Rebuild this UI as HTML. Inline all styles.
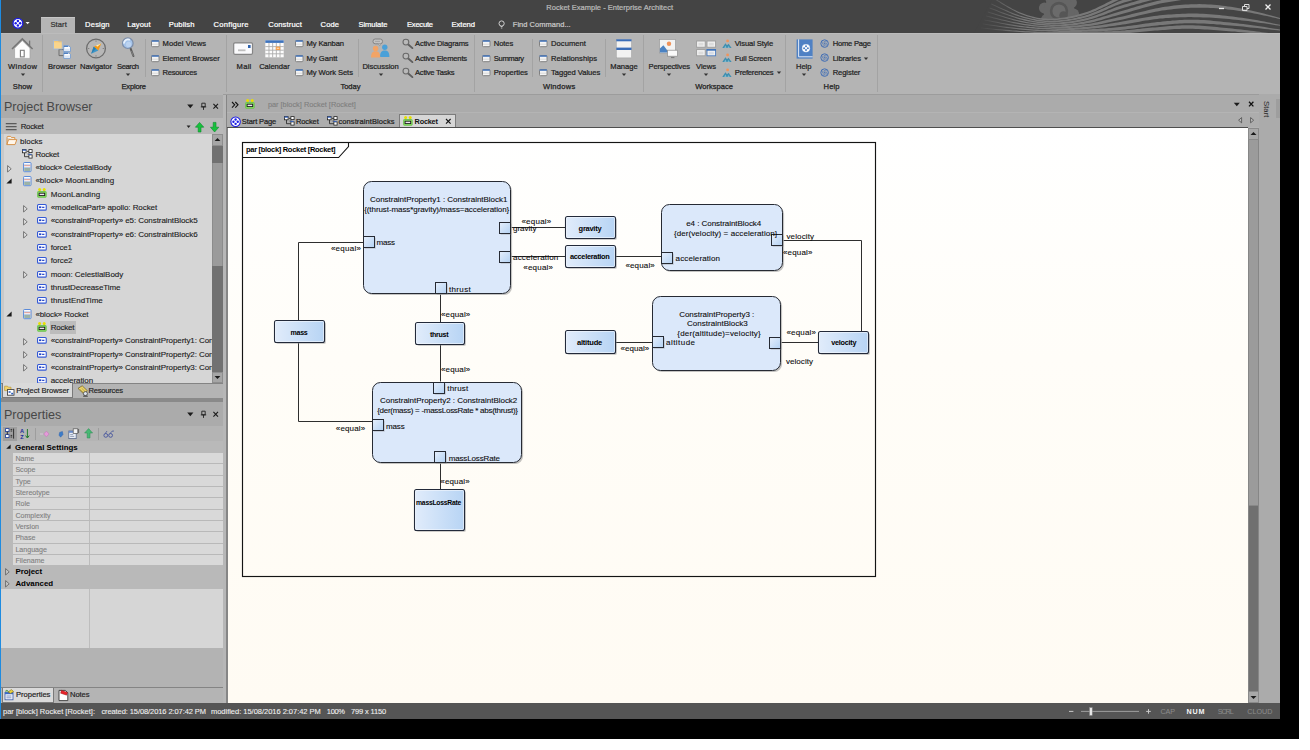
<!DOCTYPE html>
<html><head><meta charset="utf-8"><title>Rocket Example - Enterprise Architect</title><style>
html,body{margin:0;padding:0;background:#fff;}
body{width:1310px;height:750px;overflow:hidden;position:relative;font-family:"Liberation Sans",sans-serif;}
.r{position:absolute;display:block;}
svg.r{overflow:visible;}
.t{position:absolute;white-space:nowrap;font-family:"Liberation Sans",sans-serif;-webkit-text-stroke:0.22px;}
#app{position:absolute;left:0;top:0;width:1280px;height:719px;overflow:hidden;background:#b4b4b4;}
</style></head><body>
<div class="r" style="left:0px;top:0px;width:1299px;height:739px;background:#000;"></div>
<div id="app">
<div class="r" style="left:0px;top:0px;width:1280px;height:33px;background:#444444;"></div>
<svg class="r" style="left:970px;top:0px;overflow:hidden;" width="310" height="33" viewBox="0 0 310 33"><defs><linearGradient id="sf" gradientUnits="userSpaceOnUse" x1="8" x2="52" y1="0" y2="0"><stop offset="0" stop-color="#787878" stop-opacity="0"/><stop offset="1" stop-color="#787878" stop-opacity="1"/></linearGradient></defs><g transform="translate(89,11)" opacity="0.9"><circle cx="14.7" cy="3.0" r="5.4" fill="#6a6a6a"/><circle cx="8.3" cy="12.5" r="5.4" fill="#6a6a6a"/><circle cx="-3.0" cy="14.7" r="5.4" fill="#6a6a6a"/><circle cx="-12.5" cy="8.3" r="5.4" fill="#6a6a6a"/><circle cx="-14.7" cy="-3.0" r="5.4" fill="#6a6a6a"/><circle cx="-8.3" cy="-12.5" r="5.4" fill="#6a6a6a"/><circle cx="3.0" cy="-14.7" r="5.4" fill="#6a6a6a"/><circle cx="12.5" cy="-8.3" r="5.4" fill="#6a6a6a"/><circle r="15.5" fill="#6a6a6a"/><circle r="9.2" fill="#585858"/><circle r="6.6" fill="#707070"/><circle cx="4.5" cy="4.5" r="4.2" fill="#585858"/></g><polygon points="23.0,-2.0 24.2,-1.3 25.6,-0.5 27.2,0.5 29.1,1.6 31.1,2.9 33.2,4.1 35.5,5.5 37.8,6.8 40.2,8.2 42.5,9.5 44.9,10.7 47.2,11.8 49.4,12.8 51.5,13.7 53.5,14.4 55.5,15.1 57.5,15.8 59.5,16.4 61.4,17.0 63.4,17.5 65.3,17.9 67.3,18.3 69.3,18.7 71.4,19.0 73.5,19.2 75.6,19.4 77.8,19.5 80.0,19.5 82.3,19.5 84.7,19.4 87.1,19.2 89.5,19.0 92.0,18.7 94.5,18.3 97.1,17.9 99.7,17.5 102.2,17.0 104.8,16.4 107.4,15.8 109.9,15.1 112.5,14.4 115.0,13.7 117.5,12.9 120.2,11.9 122.9,10.8 125.6,9.6 128.3,8.4 131.0,7.1 133.8,5.8 136.4,4.5 139.0,3.2 141.5,2.0 143.8,0.8 146.0,-0.2 148.1,-1.2 150.0,-2.0 151.7,-2.7 153.3,-3.3 154.8,-3.9 156.2,-4.4 157.4,-4.8 158.6,-5.2 159.7,-5.5 160.7,-5.8 161.6,-6.0 162.4,-6.2 163.1,-6.5 163.8,-6.6 164.4,-6.8 165.0,-7.0 400,-10 400,40 0,40" fill="#444"/><polygon points="23.0,-2.5 24.2,-1.8 25.6,-1.0 27.2,0.0 29.1,1.1 31.1,2.3 33.2,3.6 35.5,5.0 37.8,6.3 40.2,7.6 42.5,8.9 44.9,10.1 47.2,11.2 49.4,12.2 51.5,13.1 53.5,13.8 55.5,14.5 57.5,15.2 59.5,15.8 61.4,16.3 63.4,16.8 65.3,17.3 67.3,17.7 69.3,18.0 71.4,18.3 73.5,18.5 75.6,18.6 77.8,18.7 80.0,18.8 82.3,18.7 84.7,18.6 87.1,18.4 89.5,18.1 92.0,17.8 94.5,17.4 97.1,17.0 99.7,16.5 102.2,16.0 104.8,15.4 107.4,14.8 109.9,14.1 112.5,13.3 115.0,12.6 117.5,11.7 120.2,10.7 122.9,9.6 125.6,8.4 128.3,7.1 131.0,5.8 133.8,4.5 136.4,3.1 139.0,1.8 141.5,0.6 143.8,-0.6 146.0,-1.7 148.1,-2.7 150.0,-3.5 151.7,-4.2 153.3,-4.8 154.8,-5.4 156.2,-5.9 157.4,-6.3 158.6,-6.7 159.7,-7.0 160.7,-7.3 161.6,-7.6 162.4,-7.8 163.1,-8.0 163.8,-8.2 164.4,-8.4 165.0,-8.6 165.0,-5.4 164.4,-5.3 163.8,-5.1 163.1,-4.9 162.4,-4.7 161.6,-4.5 160.7,-4.2 159.7,-3.9 158.6,-3.6 157.4,-3.3 156.2,-2.8 154.8,-2.4 153.3,-1.8 151.7,-1.2 150.0,-0.5 148.1,0.3 146.0,1.2 143.8,2.3 141.5,3.4 139.0,4.6 136.4,5.9 133.8,7.1 131.0,8.4 128.3,9.6 125.6,10.9 122.9,12.0 120.2,13.1 117.5,14.0 115.0,14.8 112.5,15.5 109.9,16.2 107.4,16.8 104.8,17.4 102.2,18.0 99.7,18.4 97.1,18.9 94.5,19.2 92.0,19.6 89.5,19.8 87.1,20.0 84.7,20.2 82.3,20.2 80.0,20.2 77.8,20.2 75.6,20.1 73.5,19.9 71.4,19.7 69.3,19.4 67.3,19.0 65.3,18.6 63.4,18.2 61.4,17.6 59.5,17.1 57.5,16.4 55.5,15.8 53.5,15.1 51.5,14.3 49.4,13.4 47.2,12.4 44.9,11.3 42.5,10.0 40.2,8.7 37.8,7.4 35.5,6.0 33.2,4.7 31.1,3.4 29.1,2.1 27.2,1.0 25.6,-0.0 24.2,-0.9 23.0,-1.5" fill="url(#sf)"/><polygon points="21.3,3.5 22.5,4.1 24.0,4.7 25.8,5.6 27.8,6.5 29.9,7.4 32.2,8.5 34.6,9.5 37.1,10.6 39.6,11.7 42.1,12.7 44.6,13.7 47.0,14.6 49.4,15.4 51.6,16.1 53.8,16.7 56.0,17.3 58.1,17.8 60.2,18.3 62.3,18.7 64.5,19.1 66.6,19.5 68.7,19.8 70.9,20.1 73.1,20.3 75.3,20.5 77.5,20.6 79.7,20.7 82.0,20.7 84.3,20.6 86.7,20.5 89.0,20.3 91.4,20.1 93.9,19.8 96.3,19.5 98.8,19.1 101.2,18.7 103.7,18.2 106.2,17.7 108.6,17.1 111.1,16.5 113.6,15.9 116.0,15.2 118.5,14.4 121.0,13.5 123.5,12.6 126.1,11.5 128.6,10.5 131.2,9.3 133.8,8.2 136.3,7.0 138.7,5.9 141.2,4.8 143.5,3.7 145.8,2.7 147.9,1.8 150.0,1.0 152.0,0.3 154.0,-0.4 155.9,-1.0 157.8,-1.6 159.6,-2.2 161.4,-2.7 163.1,-3.2 164.7,-3.6 166.3,-4.0 167.7,-4.4 169.0,-4.7 170.1,-5.1 171.1,-5.3 172.0,-5.6 172.0,-2.4 171.1,-2.2 170.1,-1.9 169.0,-1.6 167.7,-1.3 166.3,-0.9 164.7,-0.5 163.1,-0.1 161.4,0.4 159.6,0.9 157.8,1.4 155.9,2.0 154.0,2.6 152.0,3.3 150.0,4.0 147.9,4.8 145.8,5.6 143.5,6.6 141.2,7.6 138.7,8.6 136.3,9.7 133.8,10.8 131.2,11.9 128.6,13.0 126.1,14.0 123.5,15.0 121.0,15.9 118.5,16.7 116.0,17.5 113.6,18.1 111.1,18.7 108.6,19.2 106.2,19.7 103.7,20.2 101.2,20.6 98.8,21.0 96.3,21.3 93.9,21.6 91.4,21.8 89.0,22.0 86.7,22.1 84.3,22.2 82.0,22.2 79.7,22.2 77.5,22.1 75.3,21.9 73.1,21.8 70.9,21.5 68.7,21.2 66.6,20.9 64.5,20.5 62.3,20.1 60.2,19.6 58.1,19.1 56.0,18.5 53.8,17.9 51.6,17.3 49.4,16.6 47.0,15.8 44.6,14.9 42.1,13.9 39.6,12.8 37.1,11.7 34.6,10.6 32.2,9.5 29.9,8.4 27.8,7.4 25.8,6.5 24.0,5.7 22.5,5.0 21.3,4.5" fill="url(#sf)"/><polygon points="19.6,7.6 20.9,8.0 22.5,8.6 24.4,9.3 26.5,10.1 28.7,11.0 31.1,11.9 33.7,12.8 36.3,13.8 39.0,14.7 41.7,15.6 44.3,16.5 46.9,17.3 49.4,18.0 51.8,18.6 54.1,19.1 56.4,19.6 58.7,20.1 61.0,20.5 63.3,20.9 65.6,21.2 67.8,21.6 70.1,21.8 72.4,22.1 74.7,22.3 77.0,22.4 79.4,22.5 81.7,22.6 84.0,22.6 86.3,22.5 88.7,22.4 91.0,22.3 93.4,22.1 95.7,21.8 98.1,21.6 100.5,21.2 102.8,20.9 105.2,20.5 107.5,20.0 109.9,19.6 112.3,19.1 114.6,18.5 117.0,17.9 119.4,17.3 121.7,16.6 124.1,15.8 126.5,15.0 128.9,14.1 131.3,13.2 133.7,12.2 136.1,11.3 138.4,10.3 140.8,9.4 143.1,8.5 145.4,7.6 147.7,6.8 150.0,6.0 152.3,5.3 154.5,4.6 156.8,3.9 159.1,3.2 161.4,2.5 163.7,1.9 165.9,1.2 168.1,0.6 170.3,0.0 172.4,-0.6 174.4,-1.1 176.4,-1.6 178.2,-2.1 180.0,-2.6 181.7,-3.1 183.4,-3.5 185.0,-3.9 186.5,-4.2 188.1,-4.6 189.5,-4.9 190.9,-5.2 192.2,-5.5 193.4,-5.7 194.5,-5.9 195.5,-6.2 196.5,-6.4 197.3,-6.5 198.0,-6.7 198.0,-3.3 197.3,-3.2 196.5,-3.0 195.5,-2.8 194.5,-2.6 193.4,-2.4 192.2,-2.1 190.9,-1.9 189.5,-1.6 188.1,-1.3 186.5,-1.0 185.0,-0.6 183.4,-0.2 181.7,0.2 180.0,0.6 178.2,1.1 176.4,1.6 174.4,2.1 172.4,2.6 170.3,3.2 168.1,3.7 165.9,4.3 163.7,5.0 161.4,5.6 159.1,6.3 156.8,6.9 154.5,7.6 152.3,8.3 150.0,9.0 147.7,9.7 145.4,10.5 143.1,11.3 140.8,12.2 138.4,13.1 136.1,14.0 133.7,14.9 131.3,15.8 128.9,16.6 126.5,17.5 124.1,18.2 121.7,19.0 119.4,19.6 117.0,20.2 114.6,20.7 112.3,21.2 109.9,21.7 107.5,22.1 105.2,22.5 102.8,22.9 100.5,23.2 98.1,23.4 95.7,23.7 93.4,23.9 91.0,24.0 88.7,24.1 86.3,24.1 84.0,24.2 81.7,24.1 79.4,24.0 77.0,23.9 74.7,23.7 72.4,23.5 70.1,23.2 67.8,22.9 65.6,22.6 63.3,22.2 61.0,21.8 58.7,21.4 56.4,20.9 54.1,20.4 51.8,19.8 49.4,19.2 46.9,18.5 44.3,17.6 41.7,16.8 39.0,15.8 36.3,14.8 33.7,13.9 31.1,12.9 28.7,12.0 26.5,11.1 24.4,10.3 22.5,9.5 20.9,8.9 19.6,8.4" fill="url(#sf)"/><polygon points="17.9,11.6 19.3,12.0 21.0,12.5 22.9,13.1 25.1,13.8 27.5,14.5 30.1,15.3 32.8,16.1 35.6,16.9 38.4,17.7 41.2,18.5 44.0,19.3 46.8,20.0 49.4,20.6 52.0,21.1 54.4,21.5 56.8,22.0 59.3,22.4 61.7,22.7 64.2,23.0 66.7,23.3 69.1,23.6 71.6,23.8 74.0,24.0 76.4,24.2 78.8,24.3 81.2,24.4 83.6,24.5 86.0,24.5 88.3,24.4 90.7,24.4 93.0,24.2 95.3,24.1 97.6,23.9 99.9,23.7 102.1,23.4 104.4,23.1 106.7,22.8 108.9,22.5 111.2,22.1 113.4,21.7 115.7,21.3 118.0,20.8 120.3,20.3 122.5,19.8 124.7,19.2 126.9,18.6 129.1,18.0 131.3,17.3 133.5,16.6 135.7,15.9 138.0,15.2 140.3,14.5 142.6,13.7 145.0,13.0 147.5,12.2 150.0,11.5 152.6,10.8 155.3,10.0 158.1,9.2 160.9,8.3 163.8,7.5 166.7,6.6 169.6,5.7 172.6,4.9 175.5,4.0 178.5,3.2 181.4,2.4 184.3,1.7 187.2,1.0 190.0,0.4 192.9,-0.3 195.9,-0.8 199.0,-1.4 202.1,-1.9 205.3,-2.5 208.4,-3.0 211.5,-3.4 214.5,-3.9 217.3,-4.3 220.0,-4.6 222.4,-5.0 224.6,-5.3 226.5,-5.6 228.0,-5.8 228.0,-2.2 226.5,-2.0 224.6,-1.7 222.4,-1.4 220.0,-1.1 217.3,-0.8 214.5,-0.4 211.5,0.0 208.4,0.5 205.3,0.9 202.1,1.4 199.0,2.0 195.9,2.5 192.9,3.1 190.0,3.6 187.2,4.3 184.3,5.0 181.4,5.7 178.5,6.4 175.5,7.2 172.6,8.1 169.6,8.9 166.7,9.7 163.8,10.6 160.9,11.4 158.1,12.2 155.3,13.0 152.6,13.8 150.0,14.5 147.5,15.2 145.0,15.9 142.6,16.6 140.3,17.3 138.0,18.0 135.7,18.6 133.5,19.3 131.3,19.9 129.1,20.5 126.9,21.1 124.7,21.7 122.5,22.2 120.3,22.7 118.0,23.1 115.7,23.5 113.4,23.9 111.2,24.3 108.9,24.6 106.7,24.9 104.4,25.2 102.1,25.4 99.9,25.6 97.6,25.8 95.3,25.9 93.0,26.0 90.7,26.1 88.3,26.1 86.0,26.1 83.6,26.0 81.2,26.0 78.8,25.8 76.4,25.7 74.0,25.5 71.6,25.3 69.1,25.0 66.7,24.7 64.2,24.4 61.7,24.0 59.3,23.6 56.8,23.2 54.4,22.8 52.0,22.3 49.4,21.8 46.8,21.1 44.0,20.4 41.2,19.6 38.4,18.8 35.6,18.0 32.8,17.1 30.1,16.3 27.5,15.5 25.1,14.7 22.9,14.0 21.0,13.4 19.3,12.9 17.9,12.4" fill="url(#sf)"/><polygon points="16.2,15.6 17.7,15.9 19.4,16.3 21.5,16.8 23.8,17.4 26.4,18.1 29.1,18.7 31.9,19.4 34.8,20.1 37.8,20.8 40.8,21.4 43.8,22.1 46.7,22.6 49.5,23.1 52.1,23.6 54.7,24.0 57.3,24.3 59.9,24.6 62.5,24.9 65.1,25.2 67.7,25.4 70.4,25.7 73.0,25.9 75.5,26.0 78.1,26.2 80.6,26.3 83.1,26.3 85.6,26.4 88.0,26.4 90.4,26.4 92.7,26.3 95.0,26.2 97.2,26.1 99.4,26.0 101.6,25.8 103.8,25.6 106.0,25.4 108.1,25.2 110.3,24.9 112.4,24.6 114.6,24.3 116.8,24.0 119.0,23.7 121.2,23.4 123.3,23.0 125.4,22.6 127.4,22.2 129.5,21.8 131.6,21.3 133.6,20.8 135.7,20.3 137.9,19.8 140.1,19.3 142.4,18.8 144.8,18.2 147.4,17.6 150.0,17.0 152.8,16.4 155.7,15.7 158.8,14.9 162.0,14.1 165.2,13.3 168.6,12.5 171.9,11.7 175.3,10.9 178.7,10.1 182.1,9.3 185.4,8.6 188.7,7.9 191.9,7.3 195.0,6.8 198.0,6.4 201.0,6.0 203.9,5.6 206.8,5.3 209.7,5.0 212.5,4.8 215.3,4.6 218.1,4.4 220.9,4.3 223.7,4.2 226.5,4.2 229.3,4.1 232.2,4.2 235.0,4.3 237.9,4.4 240.7,4.6 243.6,4.8 246.5,5.0 249.3,5.3 252.2,5.7 255.1,6.0 257.9,6.4 260.8,6.8 263.6,7.3 266.5,7.7 269.3,8.2 272.2,8.7 275.0,9.2 277.9,9.8 281.0,10.4 284.1,11.2 287.4,12.0 290.6,12.8 293.8,13.6 297.0,14.5 300.1,15.3 303.0,16.1 305.7,16.8 308.2,17.5 310.5,18.1 312.4,18.6 314.0,19.1 314.0,19.9 312.4,19.6 310.5,19.2 308.2,18.7 305.7,18.1 303.0,17.5 300.1,16.8 297.0,16.1 293.8,15.4 290.6,14.7 287.4,14.0 284.1,13.4 281.0,12.8 277.9,12.3 275.0,11.8 272.2,11.3 269.3,10.9 266.5,10.5 263.6,10.1 260.8,9.7 257.9,9.4 255.1,9.0 252.2,8.7 249.3,8.5 246.5,8.2 243.6,8.1 240.7,7.9 237.9,7.8 235.0,7.7 232.2,7.7 229.3,7.7 226.5,7.7 223.7,7.8 220.9,7.8 218.1,7.9 215.3,8.1 212.5,8.3 209.7,8.5 206.8,8.7 203.9,9.0 201.0,9.4 198.0,9.8 195.0,10.2 191.9,10.6 188.7,11.2 185.4,11.8 182.1,12.5 178.7,13.3 175.3,14.0 171.9,14.8 168.6,15.6 165.2,16.4 162.0,17.2 158.8,18.0 155.7,18.7 152.8,19.4 150.0,20.0 147.4,20.5 144.8,21.1 142.4,21.6 140.1,22.1 137.9,22.6 135.7,23.0 133.6,23.5 131.6,23.9 129.5,24.3 127.4,24.7 125.4,25.1 123.3,25.4 121.2,25.7 119.0,26.0 116.8,26.3 114.6,26.6 112.4,26.8 110.3,27.1 108.1,27.3 106.0,27.5 103.8,27.6 101.6,27.8 99.4,27.9 97.2,28.0 95.0,28.1 92.7,28.1 90.4,28.1 88.0,28.1 85.6,28.0 83.1,27.9 80.6,27.8 78.1,27.6 75.5,27.5 73.0,27.3 70.4,27.1 67.7,26.8 65.1,26.5 62.5,26.3 59.9,25.9 57.3,25.6 54.7,25.2 52.1,24.8 49.5,24.3 46.7,23.8 43.8,23.2 40.8,22.5 37.8,21.8 34.8,21.1 31.9,20.4 29.1,19.7 26.4,19.0 23.8,18.4 21.5,17.8 19.4,17.2 17.7,16.8 16.2,16.4" fill="url(#sf)"/><polygon points="14.5,19.6 16.0,19.9 17.9,20.2 20.1,20.6 22.5,21.1 25.2,21.6 28.0,22.1 31.0,22.7 34.1,23.2 37.2,23.8 40.4,24.3 43.5,24.8 46.5,25.3 49.5,25.7 52.2,26.1 55.0,26.4 57.7,26.6 60.5,26.9 63.3,27.1 66.0,27.4 68.8,27.5 71.6,27.7 74.4,27.9 77.1,28.0 79.8,28.1 82.4,28.2 85.0,28.2 87.5,28.3 90.0,28.3 92.4,28.3 94.7,28.3 96.9,28.2 99.1,28.1 101.3,28.0 103.4,27.9 105.5,27.8 107.5,27.6 109.6,27.5 111.7,27.3 113.7,27.1 115.8,26.9 117.9,26.7 120.0,26.4 122.1,26.2 124.2,26.0 126.2,25.7 128.3,25.4 130.3,25.2 132.3,24.9 134.4,24.5 136.4,24.2 138.5,23.9 140.7,23.5 142.9,23.2 145.2,22.8 147.5,22.4 150.0,22.0 152.5,21.6 155.2,21.1 157.9,20.6 160.7,20.1 163.5,19.6 166.4,19.1 169.4,18.5 172.3,18.0 175.3,17.5 178.3,17.0 181.2,16.5 184.2,16.1 187.1,15.7 190.0,15.3 192.8,15.1 195.7,14.8 198.5,14.6 201.3,14.4 204.1,14.2 206.9,14.0 209.7,13.9 212.5,13.8 215.3,13.7 218.2,13.6 221.1,13.6 224.0,13.6 227.0,13.6 230.0,13.7 233.1,13.8 236.2,14.0 239.4,14.3 242.7,14.5 245.9,14.8 249.3,15.1 252.6,15.5 255.9,15.8 259.2,16.2 262.4,16.6 265.7,17.0 268.8,17.4 272.0,17.8 275.0,18.2 278.1,18.7 281.2,19.2 284.5,19.7 287.7,20.3 291.0,20.9 294.2,21.6 297.3,22.2 300.3,22.8 303.2,23.4 305.9,23.9 308.3,24.4 310.5,24.9 312.4,25.2 314.0,25.6 314.0,26.4 312.4,26.2 310.5,25.9 308.3,25.6 305.9,25.2 303.2,24.7 300.3,24.3 297.3,23.8 294.2,23.3 291.0,22.9 287.7,22.4 284.5,21.9 281.2,21.5 278.1,21.1 275.0,20.8 272.0,20.4 268.8,20.1 265.7,19.8 262.4,19.4 259.2,19.1 255.9,18.8 252.6,18.5 249.3,18.3 245.9,18.0 242.7,17.8 239.4,17.6 236.2,17.5 233.1,17.4 230.0,17.3 227.0,17.2 224.0,17.2 221.1,17.1 218.2,17.1 215.3,17.2 212.5,17.2 209.7,17.3 206.9,17.4 204.1,17.6 201.3,17.7 198.5,17.9 195.7,18.1 192.8,18.4 190.0,18.6 187.1,19.0 184.2,19.3 181.2,19.7 178.3,20.2 175.3,20.6 172.3,21.1 169.4,21.7 166.4,22.2 163.5,22.7 160.7,23.2 157.9,23.7 155.2,24.2 152.5,24.6 150.0,25.0 147.5,25.3 145.2,25.7 142.9,26.0 140.7,26.3 138.5,26.6 136.4,26.9 134.4,27.2 132.3,27.5 130.3,27.7 128.3,28.0 126.2,28.2 124.2,28.4 122.1,28.6 120.0,28.8 117.9,29.0 115.8,29.1 113.7,29.3 111.7,29.5 109.6,29.6 107.5,29.7 105.5,29.8 103.4,29.9 101.3,30.0 99.1,30.0 96.9,30.1 94.7,30.1 92.4,30.1 90.0,30.0 87.5,29.9 85.0,29.8 82.4,29.7 79.8,29.6 77.1,29.5 74.4,29.3 71.6,29.1 68.8,28.9 66.0,28.7 63.3,28.5 60.5,28.2 57.7,27.9 55.0,27.6 52.2,27.3 49.5,26.9 46.5,26.5 43.5,26.0 40.4,25.4 37.2,24.9 34.1,24.3 31.0,23.7 28.0,23.1 25.2,22.5 22.5,22.0 20.1,21.5 17.9,21.1 16.0,20.7 14.5,20.4" fill="url(#sf)"/><polygon points="12.8,23.6 14.4,23.8 16.4,24.1 18.7,24.4 21.2,24.7 24.0,25.1 27.0,25.5 30.1,26.0 33.4,26.4 36.6,26.8 39.9,27.2 43.2,27.6 46.4,28.0 49.5,28.3 52.4,28.6 55.3,28.8 58.1,29.0 61.1,29.2 64.0,29.4 67.0,29.5 69.9,29.7 72.9,29.8 75.8,29.9 78.6,30.0 81.5,30.1 84.2,30.1 86.9,30.1 89.5,30.2 92.0,30.2 94.4,30.2 96.7,30.2 98.9,30.2 101.1,30.1 103.1,30.1 105.2,30.0 107.2,29.9 109.1,29.8 111.1,29.7 113.0,29.6 115.0,29.5 116.9,29.4 119.0,29.3 121.0,29.2 123.0,29.1 125.0,29.0 127.0,28.9 129.0,28.7 130.9,28.6 132.9,28.5 134.8,28.4 136.8,28.2 138.8,28.1 140.9,27.9 143.1,27.7 145.3,27.5 147.6,27.3 150.0,27.0 152.5,26.7 155.2,26.4 157.9,26.1 160.8,25.7 163.7,25.3 166.6,24.9 169.6,24.4 172.6,24.0 175.6,23.6 178.6,23.2 181.6,22.8 184.5,22.5 187.3,22.1 190.0,21.9 192.6,21.6 195.2,21.3 197.7,21.1 200.1,20.9 202.5,20.6 204.8,20.4 207.2,20.3 209.6,20.1 212.0,20.0 214.4,19.8 216.9,19.8 219.5,19.7 222.2,19.7 225.0,19.7 227.9,19.8 230.9,19.9 234.0,20.1 237.2,20.3 240.4,20.6 243.6,20.9 246.9,21.2 250.3,21.5 253.6,21.9 256.9,22.2 260.2,22.6 263.5,22.9 266.8,23.3 270.0,23.7 273.3,24.1 276.7,24.5 280.3,25.0 283.9,25.5 287.6,26.0 291.2,26.6 294.8,27.1 298.3,27.7 301.6,28.2 304.7,28.7 307.5,29.1 310.0,29.5 312.2,29.9 314.0,30.2 314.0,31.1 312.2,30.9 310.0,30.6 307.5,30.3 304.7,30.0 301.6,29.7 298.3,29.3 294.8,28.9 291.2,28.5 287.6,28.1 283.9,27.7 280.3,27.4 276.7,27.0 273.3,26.6 270.0,26.3 266.8,26.0 263.5,25.7 260.2,25.4 256.9,25.2 253.6,24.9 250.3,24.6 246.9,24.4 243.6,24.1 240.4,23.9 237.2,23.8 234.0,23.6 230.9,23.5 227.9,23.4 225.0,23.3 222.2,23.2 219.5,23.2 216.9,23.3 214.4,23.3 212.0,23.4 209.6,23.5 207.2,23.7 204.8,23.8 202.5,24.0 200.1,24.2 197.7,24.5 195.2,24.7 192.6,24.9 190.0,25.1 187.3,25.4 184.5,25.7 181.6,26.0 178.6,26.4 175.6,26.8 172.6,27.2 169.6,27.6 166.6,28.0 163.7,28.4 160.8,28.8 157.9,29.1 155.2,29.4 152.5,29.7 150.0,30.0 147.6,30.2 145.3,30.4 143.1,30.6 140.9,30.7 138.8,30.8 136.8,30.9 134.8,31.0 132.9,31.1 130.9,31.2 129.0,31.3 127.0,31.4 125.0,31.4 123.0,31.5 121.0,31.6 119.0,31.6 116.9,31.7 115.0,31.8 113.0,31.8 111.1,31.9 109.1,32.0 107.2,32.0 105.2,32.0 103.1,32.1 101.1,32.1 98.9,32.1 96.7,32.1 94.4,32.0 92.0,32.0 89.5,31.9 86.9,31.8 84.2,31.7 81.5,31.6 78.6,31.5 75.8,31.3 72.9,31.2 69.9,31.1 67.0,30.9 64.0,30.7 61.1,30.5 58.1,30.3 55.3,30.0 52.4,29.8 49.5,29.5 46.4,29.1 43.2,28.7 39.9,28.3 36.6,27.9 33.4,27.4 30.1,27.0 27.0,26.5 24.0,26.1 21.2,25.7 18.7,25.3 16.4,24.9 14.4,24.6 12.8,24.4" fill="url(#sf)"/><polygon points="11.1,27.6 12.8,27.7 14.8,27.9 17.2,28.1 19.9,28.4 22.8,28.7 26.0,29.0 29.2,29.2 32.6,29.5 36.0,29.8 39.5,30.1 42.9,30.4 46.3,30.6 49.5,30.9 52.5,31.0 55.5,31.2 58.6,31.3 61.7,31.5 64.8,31.6 67.9,31.7 71.0,31.8 74.1,31.9 77.2,31.9 80.2,32.0 83.1,32.0 86.0,32.1 88.8,32.1 91.5,32.1 94.0,32.1 96.4,32.1 98.7,32.1 100.9,32.1 103.0,32.1 105.0,32.0 106.9,32.0 108.8,32.0 110.7,31.9 112.6,31.9 114.4,31.8 116.2,31.8 118.1,31.7 120.0,31.6 122.0,31.6 124.0,31.5 125.9,31.5 127.9,31.5 129.8,31.4 131.7,31.4 133.6,31.4 135.6,31.3 137.5,31.3 139.5,31.2 141.5,31.2 143.5,31.1 145.6,31.0 147.8,30.8 150.0,30.7 152.3,30.5 154.6,30.4 157.0,30.1 159.5,29.9 162.0,29.7 164.5,29.4 167.1,29.1 169.6,28.9 172.2,28.6 174.8,28.3 177.4,28.1 179.9,27.8 182.5,27.6 185.0,27.4 187.5,27.2 189.9,27.0 192.4,26.7 194.8,26.5 197.2,26.3 199.6,26.1 202.1,25.9 204.5,25.7 207.0,25.6 209.5,25.4 212.0,25.3 214.6,25.3 217.3,25.2 220.0,25.2 222.8,25.3 225.7,25.4 228.6,25.5 231.6,25.7 234.6,25.9 237.7,26.2 240.8,26.5 243.9,26.7 247.0,27.1 250.1,27.4 253.1,27.7 256.1,28.0 259.1,28.3 262.0,28.6 264.9,28.9 268.0,29.2 271.1,29.6 274.3,29.9 277.4,30.3 280.6,30.7 283.6,31.1 286.6,31.5 289.4,31.8 292.0,32.2 294.4,32.5 296.6,32.8 298.5,33.0 300.0,33.2 300.0,34.8 298.5,34.6 296.6,34.5 294.4,34.3 292.0,34.1 289.4,33.8 286.6,33.6 283.6,33.3 280.6,33.0 277.4,32.7 274.3,32.5 271.1,32.2 268.0,31.9 264.9,31.6 262.0,31.4 259.1,31.2 256.1,31.0 253.1,30.7 250.1,30.5 247.0,30.2 243.9,30.0 240.8,29.8 237.7,29.6 234.6,29.4 231.6,29.2 228.6,29.1 225.7,28.9 222.8,28.8 220.0,28.8 217.3,28.7 214.6,28.8 212.0,28.8 209.5,28.9 207.0,29.0 204.5,29.1 202.1,29.3 199.6,29.5 197.2,29.7 194.8,29.9 192.4,30.1 189.9,30.3 187.5,30.4 185.0,30.6 182.5,30.8 179.9,31.0 177.4,31.3 174.8,31.5 172.2,31.7 169.6,32.0 167.1,32.3 164.5,32.5 162.0,32.7 159.5,33.0 157.0,33.2 154.6,33.4 152.3,33.6 150.0,33.7 147.8,33.8 145.6,33.9 143.5,33.9 141.5,34.0 139.5,34.0 137.5,34.0 135.6,34.0 133.6,34.0 131.7,34.0 129.8,34.0 127.9,34.0 125.9,34.0 124.0,34.0 122.0,34.0 120.0,34.0 118.1,34.0 116.2,34.0 114.4,34.0 112.6,34.1 110.7,34.1 108.8,34.1 106.9,34.1 105.0,34.1 103.0,34.1 100.9,34.0 98.7,34.0 96.4,34.0 94.0,33.9 91.5,33.8 88.8,33.8 86.0,33.7 83.1,33.6 80.2,33.5 77.2,33.4 74.1,33.3 71.0,33.2 67.9,33.1 64.8,32.9 61.7,32.8 58.6,32.6 55.5,32.5 52.5,32.3 49.5,32.1 46.3,31.8 42.9,31.5 39.5,31.2 36.0,30.9 32.6,30.6 29.2,30.2 26.0,29.9 22.8,29.6 19.9,29.3 17.2,29.0 14.8,28.8 12.8,28.6 11.1,28.4" fill="url(#sf)"/></svg>
<svg class="r" style="left:1214px;top:0px;" width="66" height="16" viewBox="0 0 66 16"><path d="M5,8.5h5" stroke="#e8e8e8" stroke-width="1.3"/><path d="M28.5,6.5h4.5v4h-4.5z M30.5,6.5v-2h4.5v4h-2" fill="none" stroke="#dcdcdc" stroke-width="1"/><path d="M51.5,4.5l5,5m0,-5l-5,5" stroke="#f0f0f0" stroke-width="1.3"/></svg>
<div class="t" style="left:546.3px;top:2.10px;font-size:7.5px;line-height:12px;color:#b9b9b9;letter-spacing:0.011px;">Rocket Example - Enterprise Architect</div>
<svg class="r" style="left:10px;top:16px;" width="24" height="16" viewBox="0 0 24 16"><g transform="translate(7.9,7.3)"><circle r="4.9" fill="#fff" stroke="#1c1ce6" stroke-width="1.3"/><circle cx="0" cy="-2.2540000000000004" r="1.225" fill="#1c1ce6"/><circle cx="2.2540000000000004" cy="0" r="1.225" fill="#1c1ce6"/><circle cx="0" cy="2.2540000000000004" r="1.225" fill="#1c1ce6"/><circle cx="-2.2540000000000004" cy="0" r="1.225" fill="#1c1ce6"/></g><path d="M15.5,5.9h4.2l-2.1,2.4z" fill="#f4f4f4"/></svg>
<div class="r" style="left:41px;top:17px;width:34px;height:17px;background:#b5b5b5;border-top:1px solid #c6c6c6;box-sizing:border-box;"></div>
<div class="t" style="left:50.4px;top:19.30px;font-size:7.6px;line-height:12px;color:#333;letter-spacing:0.088px;">Start</div>
<div class="t" style="left:85.1px;top:19.30px;font-size:7.6px;line-height:12px;color:#fff;letter-spacing:0.168px;">Design</div>
<div class="t" style="left:127.2px;top:19.30px;font-size:7.6px;line-height:12px;color:#fff;letter-spacing:0.117px;">Layout</div>
<div class="t" style="left:168.8px;top:19.30px;font-size:7.6px;line-height:12px;color:#fff;letter-spacing:0.129px;">Publish</div>
<div class="t" style="left:213.6px;top:19.30px;font-size:7.6px;line-height:12px;color:#fff;letter-spacing:0.256px;">Configure</div>
<div class="t" style="left:268.3px;top:19.30px;font-size:7.6px;line-height:12px;color:#fff;letter-spacing:0.122px;">Construct</div>
<div class="t" style="left:320.6px;top:19.30px;font-size:7.6px;line-height:12px;color:#fff;letter-spacing:0.077px;">Code</div>
<div class="t" style="left:358.4px;top:19.30px;font-size:7.6px;line-height:12px;color:#fff;letter-spacing:-0.053px;">Simulate</div>
<div class="t" style="left:407px;top:19.30px;font-size:7.6px;line-height:12px;color:#fff;letter-spacing:-0.243px;">Execute</div>
<div class="t" style="left:451.6px;top:19.30px;font-size:7.6px;line-height:12px;color:#fff;letter-spacing:-0.052px;">Extend</div>
<svg class="r" style="left:497px;top:19px;" width="10" height="12" viewBox="0 0 10 12"><circle cx="4.6" cy="4.5" r="2.6" fill="none" stroke="#d0d0d0" stroke-width="1"/><path d="M3.6,7.5h2M3.9,9h1.4" stroke="#d0d0d0" stroke-width="0.9"/></svg>
<div class="t" style="left:512.8px;top:19.30px;font-size:7.5px;line-height:12px;color:#c9c9c9;letter-spacing:0.027px;">Find Command...</div>
<div class="r" style="left:0px;top:33px;width:1280px;height:61px;background:#b4b4b4;"></div>
<div class="r" style="left:0px;top:33px;width:1280px;height:1px;background:#bcbcbc;"></div>
<div class="r" style="left:0px;top:94px;width:1280px;height:1px;background:#9c9c9c;"></div>
<svg class="r" style="left:10px;top:37px;" width="25" height="23" viewBox="0 0 25 23"><path d="M19.6,3.6v5.4" stroke="#777" stroke-width="1.3"/><path d="M4.6,11.2 L12.3,3.6 L20,11.2 V21.4 H4.6Z" fill="#fdfdfd" stroke="#a2a2a2" stroke-width="0.7"/><path d="M2,12 L12.3,1.9 L22.6,12" fill="none" stroke="#757575" stroke-width="1.5"/><rect x="10.4" y="13.3" width="3.8" height="6.6" fill="#fff" stroke="#7c7c7c" stroke-width="1.1"/></svg>
<div class="t" style="left:8px;top:60.90px;font-size:7.6px;line-height:12px;color:#1e1e1e;letter-spacing:0.394px;">Window</div>
<svg class="r" style="left:19.5px;top:72.5px;" width="6" height="4" viewBox="0 0 6 4"><path d="M0.8,0.5h4.4l-2.2,2.6z" fill="#333"/></svg>
<div class="t" style="left:12.8px;top:81.40px;font-size:7.6px;line-height:12px;color:#222;letter-spacing:0.063px;-webkit-text-stroke:0.25px;">Show</div>
<div class="r" style="left:42px;top:35px;width:1px;height:57px;background:#a3a3a3;"></div>
<svg class="r" style="left:52px;top:37.6px;" width="20" height="21" viewBox="0 0 20 21"><path d="M7,11v6.6h5M7,11.6h5" fill="none" stroke="#6e6e6e" stroke-width="1"/><path d="M1.5,2.4h4.4l1,1.3h3.4v7.3h-8.8z" fill="#fad58c" stroke="#9db9e0" stroke-width="0.8"/><path d="M1.9,3.7h8" stroke="#f1c16a" stroke-width="0.8"/><path d="M11.8,7.6h4.6l2,1.6v4.4h-6.6z" fill="#fff" stroke="#6f98cf" stroke-width="0.9"/><rect x="12.6" y="10.6" width="5" height="2.4" fill="#dbe6f5"/><path d="M11.9,8.4h4.4" stroke="#3f74bb" stroke-width="1"/><path d="M11.8,14.6h4.6l2,1.6v4.2h-6.6z" fill="#fff" stroke="#6f98cf" stroke-width="0.9"/><rect x="12.6" y="17.4" width="5" height="2.4" fill="#dbe6f5"/><path d="M11.9,15.4h4.4" stroke="#3f74bb" stroke-width="1"/></svg>
<div class="t" style="left:48px;top:60.90px;font-size:7.6px;line-height:12px;color:#1e1e1e;letter-spacing:0.021px;">Browser</div>
<svg class="r" style="left:85px;top:38px;" width="22" height="22" viewBox="0 0 22 22"><circle cx="11" cy="10.5" r="9.4" fill="#b7b7b7" stroke="#6c6c6c" stroke-width="1.25"/><path d="M11,2.4v1.5M11,17.2v1.5M2.8,10.5h1.5M17.7,10.5h1.5" stroke="#777" stroke-width="0.8"/><path d="M16.2,5.4 L13.4,12.4 L8.6,8.8Z" fill="#f59a18"/><path d="M16.2,5.4 L12.2,8.8 L11,7.4Z" fill="#fff0b8"/><path d="M6.2,15.8 L8.6,8.8 L13.4,12.4Z" fill="#3f96c8"/><path d="M6.2,15.8 L8.6,8.8 L11,10.6Z" fill="#2b7fb0"/></svg>
<div class="t" style="left:80px;top:60.90px;font-size:7.6px;line-height:12px;color:#1e1e1e;letter-spacing:-0.066px;">Navigator</div>
<svg class="r" style="left:119px;top:36px;" width="18" height="22" viewBox="0 0 18 22"><path d="M11.4,12 L14.4,20" stroke="#5c5c5c" stroke-width="2.1" stroke-linecap="round"/><path d="M12.6,15.4 L14.2,19.6" stroke="#8a8a8a" stroke-width="0.8" stroke-linecap="round"/><circle cx="8.8" cy="7.2" r="5.3" fill="#a5c4ea" stroke="#7c8da8" stroke-width="1.2"/><path d="M5,6.8a4,4 0 0 1 5.2,-3.2" fill="none" stroke="#eaf2fc" stroke-width="1.8" stroke-linecap="round"/><circle cx="9.6" cy="8.4" r="2.6" fill="#c6daf2" opacity="0.7"/></svg>
<div class="t" style="left:117px;top:60.90px;font-size:7.6px;line-height:12px;color:#1e1e1e;letter-spacing:-0.416px;">Search</div>
<svg class="r" style="left:125.0px;top:72.5px;" width="6" height="4" viewBox="0 0 6 4"><path d="M0.8,0.5h4.4l-2.2,2.6z" fill="#333"/></svg>
<div class="r" style="left:144.5px;top:39px;width:1px;height:38px;background:#a3a3a3;"></div>
<svg class="r" style="left:151px;top:39.9px;" width="9" height="8" viewBox="0 0 9 8"><rect x="0.5" y="0.5" width="7.5" height="6.2" rx="0.9" fill="#f4f4f4" stroke="#808080" stroke-width="1"/><rect x="0.6" y="0.3" width="7.3" height="1.5" fill="#4576bb"/><path d="M1,4.2h6.5" stroke="#c9c9c9" stroke-width="0.6"/></svg>
<div class="t" style="left:162.5px;top:37.90px;font-size:7.6px;line-height:12px;color:#1e1e1e;letter-spacing:0.075px;">Model Views</div>
<svg class="r" style="left:151px;top:54.6px;" width="9" height="8" viewBox="0 0 9 8"><rect x="0.5" y="0.5" width="7.5" height="6.2" rx="0.9" fill="#f4f4f4" stroke="#808080" stroke-width="1"/><rect x="0.6" y="0.3" width="7.3" height="1.5" fill="#4576bb"/><path d="M1,4.2h6.5" stroke="#c9c9c9" stroke-width="0.6"/></svg>
<div class="t" style="left:162.5px;top:52.60px;font-size:7.6px;line-height:12px;color:#1e1e1e;letter-spacing:-0.04px;">Element Browser</div>
<svg class="r" style="left:151px;top:69.1px;" width="9" height="8" viewBox="0 0 9 8"><rect x="0.5" y="0.5" width="7.5" height="6.2" rx="0.9" fill="#f4f4f4" stroke="#808080" stroke-width="1"/><rect x="0.6" y="0.3" width="7.3" height="1.5" fill="#4576bb"/><path d="M1,4.2h6.5" stroke="#c9c9c9" stroke-width="0.6"/></svg>
<div class="t" style="left:162.5px;top:67.10px;font-size:7.6px;line-height:12px;color:#1e1e1e;letter-spacing:-0.228px;">Resources</div>
<div class="t" style="left:121.5px;top:81.40px;font-size:7.6px;line-height:12px;color:#222;letter-spacing:-0.211px;-webkit-text-stroke:0.25px;">Explore</div>
<div class="r" style="left:226px;top:35px;width:1px;height:57px;background:#a3a3a3;"></div>
<svg class="r" style="left:233px;top:41.5px;" width="21" height="14" viewBox="0 0 21 14"><rect x="0.7" y="0.9" width="18.8" height="11.4" rx="1.2" fill="#fafafc" stroke="#858585" stroke-width="1.2"/><rect x="15" y="3" width="2.6" height="3" fill="#2f63ad"/><rect x="5" y="7.4" width="7.5" height="1.8" fill="#bfbfbf"/></svg>
<div class="t" style="left:236.6px;top:60.90px;font-size:7.6px;line-height:12px;color:#1e1e1e;letter-spacing:0.255px;">Mail</div>
<svg class="r" style="left:265px;top:40px;" width="19" height="18" viewBox="0 0 19 18"><rect x="0.3" y="0.3" width="18.4" height="17" fill="#fdfdfd"/><rect x="0.3" y="0.3" width="18.4" height="2.6" fill="#3e73bd"/><path d="M3.98,3v14.3" stroke="#adadad" stroke-width="0.9"/><path d="M7.66,3v14.3" stroke="#adadad" stroke-width="0.9"/><path d="M11.34,3v14.3" stroke="#adadad" stroke-width="0.9"/><path d="M15.02,3v14.3" stroke="#adadad" stroke-width="0.9"/><path d="M0.3,6.60h18.4" stroke="#adadad" stroke-width="0.9"/><path d="M0.3,10.20h18.4" stroke="#adadad" stroke-width="0.9"/><path d="M0.3,13.80h18.4" stroke="#adadad" stroke-width="0.9"/><rect x="10.8" y="6.6" width="4.4" height="3.4" fill="#f5a04c"/><rect x="11.8" y="7.8" width="2.4" height="1" fill="#fde3c6"/></svg>
<div class="t" style="left:259.2px;top:60.90px;font-size:7.6px;line-height:12px;color:#1e1e1e;letter-spacing:-0.049px;">Calendar</div>
<svg class="r" style="left:295px;top:39.9px;" width="9" height="8" viewBox="0 0 9 8"><rect x="0.5" y="0.5" width="7.5" height="6.2" rx="0.9" fill="#f4f4f4" stroke="#808080" stroke-width="1"/><rect x="0.6" y="0.3" width="7.3" height="1.5" fill="#4576bb"/><path d="M1,4.2h6.5" stroke="#c9c9c9" stroke-width="0.6"/></svg>
<div class="t" style="left:306.6px;top:37.90px;font-size:7.6px;line-height:12px;color:#1e1e1e;letter-spacing:-0.13px;">My Kanban</div>
<svg class="r" style="left:295px;top:54.6px;" width="9" height="8" viewBox="0 0 9 8"><rect x="0.5" y="0.5" width="7.5" height="6.2" rx="0.9" fill="#f4f4f4" stroke="#808080" stroke-width="1"/><rect x="0.6" y="0.3" width="7.3" height="1.5" fill="#4576bb"/><path d="M1,4.2h6.5" stroke="#c9c9c9" stroke-width="0.6"/></svg>
<div class="t" style="left:306.6px;top:52.60px;font-size:7.6px;line-height:12px;color:#1e1e1e;letter-spacing:0.01px;">My Gantt</div>
<svg class="r" style="left:295px;top:69.1px;" width="9" height="8" viewBox="0 0 9 8"><rect x="0.5" y="0.5" width="7.5" height="6.2" rx="0.9" fill="#f4f4f4" stroke="#808080" stroke-width="1"/><rect x="0.6" y="0.3" width="7.3" height="1.5" fill="#4576bb"/><path d="M1,4.2h6.5" stroke="#c9c9c9" stroke-width="0.6"/></svg>
<div class="t" style="left:306.6px;top:67.10px;font-size:7.6px;line-height:12px;color:#1e1e1e;letter-spacing:-0.068px;">My Work Sets</div>
<div class="r" style="left:357.5px;top:39px;width:1px;height:38px;background:#a3a3a3;"></div>
<svg class="r" style="left:370px;top:38px;" width="21" height="20" viewBox="0 0 21 20"><rect x="3" y="1" width="9.5" height="4.8" rx="2.2" fill="#c2c2c2" stroke="#7e7e7e" stroke-width="0.9"/><path d="M8,5.8l1.8,2l0.8,-2" fill="#c2c2c2" stroke="#8e8e8e" stroke-width="0.6"/><path d="M5,3.4h5" stroke="#8e8e8e" stroke-width="0.6"/><circle cx="14.8" cy="9.3" r="2.7" fill="#4aa0d8"/><path d="M10,19 c0,-5 2,-6.4 4.8,-6.4 s4.6,1.4 4.6,6.4z" fill="#4aa0d8"/><circle cx="5.6" cy="10.4" r="2.7" fill="#f2a466"/><path d="M1,19.6 c0,-5 2,-6.4 4.6,-6.4 s4.6,1.4 4.6,6.4z" fill="#f2a466"/></svg>
<div class="t" style="left:362.4px;top:60.90px;font-size:7.6px;line-height:12px;color:#1e1e1e;letter-spacing:-0.039px;">Discussion</div>
<svg class="r" style="left:377.6px;top:72.5px;" width="6" height="4" viewBox="0 0 6 4"><path d="M0.8,0.5h4.4l-2.2,2.6z" fill="#333"/></svg>
<svg class="r" style="left:401.5px;top:37.5px;" width="12" height="12" viewBox="0 0 12 12"><path d="M6,6.2 L10.4,10.1" stroke="#5e5e5e" stroke-width="1.9" stroke-linecap="round"/><circle cx="3.9" cy="4.1" r="2.9" fill="#b9b9b9" stroke="#6a6a6a" stroke-width="1.1"/></svg>
<div class="t" style="left:415px;top:37.90px;font-size:7.6px;line-height:12px;color:#1e1e1e;letter-spacing:-0.116px;">Active Diagrams</div>
<svg class="r" style="left:401.5px;top:52.2px;" width="12" height="12" viewBox="0 0 12 12"><path d="M6,6.2 L10.4,10.1" stroke="#5e5e5e" stroke-width="1.9" stroke-linecap="round"/><circle cx="3.9" cy="4.1" r="2.9" fill="#b9b9b9" stroke="#6a6a6a" stroke-width="1.1"/></svg>
<div class="t" style="left:415px;top:52.60px;font-size:7.6px;line-height:12px;color:#1e1e1e;letter-spacing:-0.163px;">Active Elements</div>
<svg class="r" style="left:401.5px;top:66.7px;" width="12" height="12" viewBox="0 0 12 12"><path d="M6,6.2 L10.4,10.1" stroke="#5e5e5e" stroke-width="1.9" stroke-linecap="round"/><circle cx="3.9" cy="4.1" r="2.9" fill="#b9b9b9" stroke="#6a6a6a" stroke-width="1.1"/></svg>
<div class="t" style="left:415px;top:67.10px;font-size:7.6px;line-height:12px;color:#1e1e1e;letter-spacing:-0.227px;">Active Tasks</div>
<div class="t" style="left:340.4px;top:81.40px;font-size:7.6px;line-height:12px;color:#222;letter-spacing:-0.045px;-webkit-text-stroke:0.25px;">Today</div>
<div class="r" style="left:474px;top:35px;width:1px;height:57px;background:#a3a3a3;"></div>
<svg class="r" style="left:482px;top:39.9px;" width="9" height="8" viewBox="0 0 9 8"><rect x="0.5" y="0.5" width="7.5" height="6.2" rx="0.9" fill="#f4f4f4" stroke="#808080" stroke-width="1"/><rect x="0.6" y="0.3" width="7.3" height="1.5" fill="#4576bb"/><path d="M1,4.2h6.5" stroke="#c9c9c9" stroke-width="0.6"/></svg>
<div class="t" style="left:493.8px;top:37.90px;font-size:7.6px;line-height:12px;color:#1e1e1e;letter-spacing:-0.113px;">Notes</div>
<svg class="r" style="left:482px;top:54.6px;" width="9" height="8" viewBox="0 0 9 8"><rect x="0.5" y="0.5" width="7.5" height="6.2" rx="0.9" fill="#f4f4f4" stroke="#808080" stroke-width="1"/><rect x="0.6" y="0.3" width="7.3" height="1.5" fill="#4576bb"/><path d="M1,4.2h6.5" stroke="#c9c9c9" stroke-width="0.6"/></svg>
<div class="t" style="left:493.8px;top:52.60px;font-size:7.6px;line-height:12px;color:#1e1e1e;letter-spacing:-0.353px;">Summary</div>
<svg class="r" style="left:482px;top:69.1px;" width="9" height="8" viewBox="0 0 9 8"><rect x="0.5" y="0.5" width="7.5" height="6.2" rx="0.9" fill="#f4f4f4" stroke="#808080" stroke-width="1"/><rect x="0.6" y="0.3" width="7.3" height="1.5" fill="#4576bb"/><path d="M1,4.2h6.5" stroke="#c9c9c9" stroke-width="0.6"/></svg>
<div class="t" style="left:493.8px;top:67.10px;font-size:7.6px;line-height:12px;color:#1e1e1e;letter-spacing:-0.06px;">Properties</div>
<div class="r" style="left:532px;top:39px;width:1px;height:38px;background:#a3a3a3;"></div>
<svg class="r" style="left:539.3px;top:39.9px;" width="9" height="8" viewBox="0 0 9 8"><rect x="0.5" y="0.5" width="7.5" height="6.2" rx="0.9" fill="#f4f4f4" stroke="#808080" stroke-width="1"/><rect x="0.6" y="0.3" width="7.3" height="1.5" fill="#4576bb"/><path d="M1,4.2h6.5" stroke="#c9c9c9" stroke-width="0.6"/></svg>
<div class="t" style="left:551px;top:37.90px;font-size:7.6px;line-height:12px;color:#1e1e1e;letter-spacing:0.052px;">Document</div>
<svg class="r" style="left:539.3px;top:54.6px;" width="9" height="8" viewBox="0 0 9 8"><rect x="0.5" y="0.5" width="7.5" height="6.2" rx="0.9" fill="#f4f4f4" stroke="#808080" stroke-width="1"/><rect x="0.6" y="0.3" width="7.3" height="1.5" fill="#4576bb"/><path d="M1,4.2h6.5" stroke="#c9c9c9" stroke-width="0.6"/></svg>
<div class="t" style="left:551px;top:52.60px;font-size:7.6px;line-height:12px;color:#1e1e1e;letter-spacing:0.031px;">Relationships</div>
<svg class="r" style="left:539.3px;top:69.1px;" width="9" height="8" viewBox="0 0 9 8"><rect x="0.5" y="0.5" width="7.5" height="6.2" rx="0.9" fill="#f4f4f4" stroke="#808080" stroke-width="1"/><rect x="0.6" y="0.3" width="7.3" height="1.5" fill="#4576bb"/><path d="M1,4.2h6.5" stroke="#c9c9c9" stroke-width="0.6"/></svg>
<div class="t" style="left:551px;top:67.10px;font-size:7.6px;line-height:12px;color:#1e1e1e;letter-spacing:-0.035px;">Tagged Values</div>
<div class="r" style="left:604.5px;top:39px;width:1px;height:38px;background:#a3a3a3;"></div>
<svg class="r" style="left:616px;top:38.5px;" width="16" height="19.5" viewBox="0 0 16 19.5"><rect x="0.3" y="0.3" width="15.2" height="18.6" fill="#f2f2f2" stroke="#9c9c9c" stroke-width="0.5"/><rect x="0.3" y="0.3" width="15.2" height="2" fill="#3a6db8"/><rect x="0.3" y="8.6" width="15.2" height="2.4" fill="#3a6db8"/></svg>
<div class="t" style="left:610.3px;top:60.90px;font-size:7.6px;line-height:12px;color:#1e1e1e;letter-spacing:0.007px;">Manage</div>
<svg class="r" style="left:621.05px;top:72.5px;" width="6" height="4" viewBox="0 0 6 4"><path d="M0.8,0.5h4.4l-2.2,2.6z" fill="#333"/></svg>
<div class="t" style="left:543px;top:81.40px;font-size:7.6px;line-height:12px;color:#222;letter-spacing:0.245px;-webkit-text-stroke:0.25px;">Windows</div>
<div class="r" style="left:642.5px;top:35px;width:1px;height:57px;background:#a3a3a3;"></div>
<svg class="r" style="left:659px;top:39px;" width="19.5" height="20" viewBox="0 0 19.5 20"><rect x="0.5" y="0.5" width="16" height="13.5" fill="#f3f3f3" stroke="#9a9a9a" stroke-width="0.7"/><circle cx="10" cy="4.8" r="2.2" fill="#f0935a"/><path d="M0.9,13.6V9.5l3.5,-3.3l5.5,7.4z" fill="#4b82c2"/><rect x="8.6" y="11.2" width="10" height="6" fill="#fafafa" stroke="#8c8c8c" stroke-width="0.7"/><path d="M12,18.6h3.4" stroke="#777" stroke-width="1"/></svg>
<div class="t" style="left:648.6px;top:60.90px;font-size:7.6px;line-height:12px;color:#1e1e1e;letter-spacing:-0.191px;">Perspectives</div>
<svg class="r" style="left:666.3px;top:72.5px;" width="6" height="4" viewBox="0 0 6 4"><path d="M0.8,0.5h4.4l-2.2,2.6z" fill="#333"/></svg>
<svg class="r" style="left:695.5px;top:40px;" width="21" height="17.5" viewBox="0 0 21 17.5"><rect x="0.6" y="1" width="8.6" height="6.2" fill="#f1f1f1" stroke="#9c9c9c" stroke-width="0.9"/><rect x="11" y="1" width="8.6" height="6.2" fill="#f1f1f1" stroke="#9c9c9c" stroke-width="0.9"/><rect x="0.6" y="9.6" width="8.6" height="6.2" fill="#f1f1f1" stroke="#9c9c9c" stroke-width="0.9"/><rect x="11" y="9.6" width="8.6" height="6.2" fill="#f1f1f1" stroke="#4a7cc0" stroke-width="0.9"/><rect x="10.6" y="9.1" width="9.4" height="1.6" fill="#3f74bb"/><rect x="2.4" y="2.8" width="5" height="2.8" fill="#dcdcdc"/><rect x="12.8" y="2.8" width="5" height="2.8" fill="#dcdcdc"/><rect x="2.4" y="11.6" width="5" height="2.8" fill="#dcdcdc"/><rect x="12.8" y="11.8" width="5" height="2.6" fill="#d4dce8"/></svg>
<div class="t" style="left:696px;top:60.90px;font-size:7.6px;line-height:12px;color:#1e1e1e;letter-spacing:-0.034px;">Views</div>
<svg class="r" style="left:703.0px;top:72.5px;" width="6" height="4" viewBox="0 0 6 4"><path d="M0.8,0.5h4.4l-2.2,2.6z" fill="#333"/></svg>
<svg class="r" style="left:722px;top:38.5px;" width="10" height="10" viewBox="0 0 10 10"><circle cx="5.6" cy="1.9" r="1.4" fill="#f0935a"/><path d="M0.3,9 L3.4,4.2 L5,6.2 L6.6,4.8 L9.6,9Z" fill="#3f8fb0"/><path d="M2.2,9 L3.4,6.6 L4.6,9Z M5.4,9 L6.6,7 L7.8,9Z" fill="#7fb9cf"/></svg>
<div class="t" style="left:734.8px;top:37.90px;font-size:7.6px;line-height:12px;color:#1e1e1e;letter-spacing:-0.106px;">Visual Style</div>
<svg class="r" style="left:722px;top:53.2px;" width="10" height="10" viewBox="0 0 10 10"><circle cx="5.6" cy="1.9" r="1.4" fill="#f0935a"/><path d="M0.3,9 L3.4,4.2 L5,6.2 L6.6,4.8 L9.6,9Z" fill="#3f8fb0"/><path d="M2.2,9 L3.4,6.6 L4.6,9Z M5.4,9 L6.6,7 L7.8,9Z" fill="#7fb9cf"/></svg>
<div class="t" style="left:734.8px;top:52.60px;font-size:7.6px;line-height:12px;color:#1e1e1e;letter-spacing:-0.154px;">Full Screen</div>
<svg class="r" style="left:722px;top:67.7px;" width="10" height="10" viewBox="0 0 10 10"><circle cx="5.6" cy="1.9" r="1.4" fill="#f0935a"/><path d="M0.3,9 L3.4,4.2 L5,6.2 L6.6,4.8 L9.6,9Z" fill="#3f8fb0"/><path d="M2.2,9 L3.4,6.6 L4.6,9Z M5.4,9 L6.6,7 L7.8,9Z" fill="#7fb9cf"/></svg>
<div class="t" style="left:734.8px;top:67.10px;font-size:7.6px;line-height:12px;color:#1e1e1e;letter-spacing:-0.217px;">Preferences</div>
<svg class="r" style="left:776px;top:71px;" width="6" height="4" viewBox="0 0 6 4"><path d="M0.8,0.5h4.4l-2.2,2.6z" fill="#333"/></svg>
<div class="t" style="left:695.3px;top:81.40px;font-size:7.6px;line-height:12px;color:#222;letter-spacing:-0.022px;-webkit-text-stroke:0.25px;">Workspace</div>
<div class="r" style="left:785.2px;top:35px;width:1px;height:57px;background:#a3a3a3;"></div>
<svg class="r" style="left:795.5px;top:38.5px;" width="17" height="20" viewBox="0 0 17 20"><rect x="0.6" y="0.4" width="16" height="19.2" fill="#4f81c4"/><path d="M2.6,0.4v17.4h14" fill="none" stroke="#f2f5fa" stroke-width="0.9"/><g transform="translate(10,9.2)"><circle r="4.1" fill="#ffffff" stroke="#4f81c4" stroke-width="0.4"/><circle cx="0" cy="-1.886" r="1.025" fill="#4f81c4"/><circle cx="1.886" cy="0" r="1.025" fill="#4f81c4"/><circle cx="0" cy="1.886" r="1.025" fill="#4f81c4"/><circle cx="-1.886" cy="0" r="1.025" fill="#4f81c4"/></g></svg>
<div class="t" style="left:796px;top:60.90px;font-size:7.6px;line-height:12px;color:#1e1e1e;letter-spacing:-0.077px;">Help</div>
<svg class="r" style="left:800.7px;top:72.5px;" width="6" height="4" viewBox="0 0 6 4"><path d="M0.8,0.5h4.4l-2.2,2.6z" fill="#333"/></svg>
<svg class="r" style="left:820.2px;top:38.699999999999996px;" width="10" height="10" viewBox="0 0 10 10"><circle cx="4.6" cy="4.6" r="3.8" fill="none" stroke="#4470b4" stroke-width="1"/><path d="M4.6,4.6 C3,2.6 5.4,1.4 6.6,2.6 M4.6,4.6 C6.6,3 7.8,5.4 6.6,6.6 M4.6,4.6 C6.2,6.6 3.8,7.8 2.6,6.6 M4.6,4.6 C2.6,6.2 1.4,3.8 2.6,2.6" fill="none" stroke="#4470b4" stroke-width="0.8"/></svg>
<div class="t" style="left:832.7px;top:37.90px;font-size:7.6px;line-height:12px;color:#1e1e1e;letter-spacing:-0.229px;">Home Page</div>
<svg class="r" style="left:820.2px;top:53.4px;" width="10" height="10" viewBox="0 0 10 10"><circle cx="4.6" cy="4.6" r="3.8" fill="none" stroke="#4470b4" stroke-width="1"/><path d="M4.6,4.6 C3,2.6 5.4,1.4 6.6,2.6 M4.6,4.6 C6.6,3 7.8,5.4 6.6,6.6 M4.6,4.6 C6.2,6.6 3.8,7.8 2.6,6.6 M4.6,4.6 C2.6,6.2 1.4,3.8 2.6,2.6" fill="none" stroke="#4470b4" stroke-width="0.8"/></svg>
<div class="t" style="left:832.7px;top:52.60px;font-size:7.6px;line-height:12px;color:#1e1e1e;letter-spacing:-0.106px;">Libraries</div>
<svg class="r" style="left:820.2px;top:67.9px;" width="10" height="10" viewBox="0 0 10 10"><circle cx="4.6" cy="4.6" r="3.8" fill="none" stroke="#4470b4" stroke-width="1"/><path d="M4.6,4.6 C3,2.6 5.4,1.4 6.6,2.6 M4.6,4.6 C6.6,3 7.8,5.4 6.6,6.6 M4.6,4.6 C6.2,6.6 3.8,7.8 2.6,6.6 M4.6,4.6 C2.6,6.2 1.4,3.8 2.6,2.6" fill="none" stroke="#4470b4" stroke-width="0.8"/></svg>
<div class="t" style="left:832.7px;top:67.10px;font-size:7.6px;line-height:12px;color:#1e1e1e;letter-spacing:-0.086px;">Register</div>
<svg class="r" style="left:863.3px;top:56.5px;" width="6" height="4" viewBox="0 0 6 4"><path d="M0.8,0.5h4.4l-2.2,2.6z" fill="#333"/></svg>
<div class="t" style="left:823.6px;top:81.40px;font-size:7.6px;line-height:12px;color:#222;letter-spacing:0.056px;-webkit-text-stroke:0.25px;">Help</div>
<div class="r" style="left:876.5px;top:35px;width:1px;height:57px;background:#a3a3a3;"></div>
<div class="r" style="left:0px;top:95px;width:1280px;height:608px;background:#b2b2b2;"></div>
<div class="r" style="left:1px;top:94px;width:222px;height:609px;background:#b4b4b4;"></div>
<div class="r" style="left:1px;top:95px;width:222px;height:23px;background:#ababab;"></div>
<div class="t" style="left:4.0px;top:101.00px;font-size:12.55px;line-height:12px;color:#474747;-webkit-text-stroke:0;">Project Browser</div>
<svg class="r" style="left:186px;top:102.3px;" width="34" height="9" viewBox="0 0 34 9"><path d="M1.2,2.6h6.2l-3.1,3.6z" fill="#1b1b1b"/><path d="M15.8,1.2h3.4v3.6h-3.4z M14.8,4.9h5.4 M17.5,4.9v3" fill="none" stroke="#222" stroke-width="0.9"/><path d="M27.4,1.9l4.6,4.8m0,-4.8l-4.6,4.8" stroke="#1b1b1b" stroke-width="1.1"/></svg>
<div class="r" style="left:1px;top:118px;width:222px;height:16px;background:#b9b9b9;"></div>
<svg class="r" style="left:5px;top:122px;" width="13" height="10" viewBox="0 0 13 10"><path d="M0.8,1.6h10.8M0.8,4.6h10.8M0.8,7.6h10.8" stroke="#5a5a5a" stroke-width="1.1"/></svg>
<div class="t" style="left:20.7px;top:121.40px;font-size:7.8px;line-height:12px;color:#222;letter-spacing:-0.255px;-webkit-text-stroke:0.15px;">Rocket</div>
<svg class="r" style="left:186px;top:124.5px;" width="6" height="4" viewBox="0 0 6 4"><path d="M0.6,0.5h4l-2,2.4z" fill="#222"/></svg>
<svg class="r" style="left:195.4px;top:121.6px;" width="10" height="11" viewBox="0 0 10 11"><path d="M4.6,0.4 L8.8,5.2 H6 V10 H3.2 V5.2 H0.4Z" fill="#16c23c" stroke="#0a8a2a" stroke-width="0.6"/></svg>
<svg class="r" style="left:210px;top:121.6px;" width="10" height="11" viewBox="0 0 10 11"><g transform="translate(0,10.4) scale(1,-1)"><path d="M4.6,0.4 L8.8,5.2 H6 V10 H3.2 V5.2 H0.4Z" fill="#16c23c" stroke="#0a8a2a" stroke-width="0.6"/></g></svg>
<div class="r" style="left:1px;top:134px;width:2.5px;height:249px;background:#c9c9c9;"></div>
<div class="r" style="left:3.5px;top:134px;width:208.5px;height:249px;background:#d6d6d6;"></div>
<div class="r" style="left:49.5px;top:321px;width:26.5px;height:12.6px;background:#bcbcbc;"></div>
<div class="r" style="left:0;top:134px;width:212px;height:249px;overflow:hidden;">
<svg class="r" style="left:5.8px;top:1.199999999999994px;" width="12" height="11" viewBox="0 0 12 11"><path d="M1,2.4 q0,-1 1,-1 h2.6 l1,1.2 h3.2 v2" fill="#fdf3e4" stroke="#d48a3c" stroke-width="0.9"/><path d="M0.8,9.6 L2.6,4.6 h8.2 l-1.8,5z" fill="#fff6ea" stroke="#d48a3c" stroke-width="0.9"/><path d="M1,2.4v7" stroke="#d48a3c" stroke-width="0.9"/></svg>
<div class="t" style="left:20.0px;top:1.50px;font-size:8.0px;line-height:12px;color:#1c1c1c;letter-spacing:-0.016px;-webkit-text-stroke:0.12px;">blocks</div>
<svg class="r" style="left:21.7px;top:15.119999999999987px;" width="11" height="10" viewBox="0 0 11 10"><path d="M2.5,3.5v4.2h5 M5,2.4h2.5 M5.6,5h2" fill="none" stroke="#222" stroke-width="0.8"/><rect x="0.5" y="0.6" width="3.6" height="3.2" fill="#fff" stroke="#222" stroke-width="0.8"/><rect x="0.5" y="0.6" width="3.6" height="1.1" fill="#2f62c8"/><rect x="6.9" y="0.6" width="3.2" height="3" fill="#fff" stroke="#222" stroke-width="0.8"/><rect x="6.9" y="5.9" width="3.2" height="3.2" fill="#fff" stroke="#222" stroke-width="0.8"/><path d="M6.4,5.4h3.2" stroke="#2f62c8" stroke-width="0.9"/></svg>
<div class="t" style="left:35.4px;top:14.82px;font-size:8.0px;line-height:12px;color:#1c1c1c;letter-spacing:-0.2px;-webkit-text-stroke:0.12px;">Rocket</div>
<svg class="r" style="left:7.4px;top:30.640000000000008px;" width="6" height="8" viewBox="0 0 6 8"><path d="M0.6,0.6v6.4l3.6,-3.2z" fill="#e2e2e2" stroke="#5a5a5a" stroke-width="0.8"/></svg>
<svg class="r" style="left:22.8px;top:28.24000000000001px;" width="9" height="11" viewBox="0 0 9 11"><rect x="0.6" y="0.5" width="7.4" height="9.2" rx="0.8" fill="#fbfbfd" stroke="#4a7fd6" stroke-width="0.9"/><rect x="1.2" y="3.1" width="6.2" height="1.1" fill="#f0a08c"/><rect x="1.2" y="5.8" width="6.2" height="3.2" fill="#9db3a6"/><path d="M1.2,2.8h6.2 M1.2,5.6h6.2" stroke="#7da2dc" stroke-width="0.5"/></svg>
<div class="t" style="left:35.4px;top:28.14px;font-size:8.0px;line-height:12px;color:#1c1c1c;letter-spacing:-0.131px;-webkit-text-stroke:0.12px;">«block» CelestialBody</div>
<svg class="r" style="left:6.0px;top:43.96px;" width="7" height="7" viewBox="0 0 7 7"><path d="M5.6,0.4v5.2h-5.2z" fill="#1a1a1a"/></svg>
<svg class="r" style="left:22.8px;top:41.56px;" width="9" height="11" viewBox="0 0 9 11"><rect x="0.6" y="0.5" width="7.4" height="9.2" rx="0.8" fill="#fbfbfd" stroke="#4a7fd6" stroke-width="0.9"/><rect x="1.2" y="3.1" width="6.2" height="1.1" fill="#f0a08c"/><rect x="1.2" y="5.8" width="6.2" height="3.2" fill="#9db3a6"/><path d="M1.2,2.8h6.2 M1.2,5.6h6.2" stroke="#7da2dc" stroke-width="0.5"/></svg>
<div class="t" style="left:35.4px;top:41.46px;font-size:8.0px;line-height:12px;color:#1c1c1c;letter-spacing:0.034px;-webkit-text-stroke:0.12px;">«block» MoonLanding</div>
<svg class="r" style="left:37.3px;top:54.48px;" width="10" height="10" viewBox="0 0 10 10"><path d="M2.6,1.6v2.6M7.2,1.6v2.2" stroke="#222a44" stroke-width="0.7"/><circle cx="2.6" cy="1.4" r="1.5" fill="#e8e000"/><circle cx="7.2" cy="1.4" r="1.5" fill="#e8e000"/><rect x="0.6" y="3.5" width="8.6" height="5.8" rx="0.6" fill="#8be068" stroke="#6cc24e" stroke-width="0.9"/><rect x="2.1" y="5.2" width="5.6" height="2.4" fill="#efe2f2" stroke="#1c1c1c" stroke-width="0.9"/></svg>
<div class="t" style="left:50.7px;top:54.78px;font-size:8.0px;line-height:12px;color:#1c1c1c;letter-spacing:0.101px;-webkit-text-stroke:0.12px;">MoonLanding</div>
<svg class="r" style="left:22.8px;top:70.6px;" width="6" height="8" viewBox="0 0 6 8"><path d="M0.6,0.6v6.4l3.6,-3.2z" fill="#e2e2e2" stroke="#5a5a5a" stroke-width="0.8"/></svg>
<svg class="r" style="left:37.3px;top:69.99999999999999px;" width="10" height="7" viewBox="0 0 10 7"><rect x="0.55" y="0.55" width="8.7" height="5.6" rx="1" fill="#fdfdff" stroke="#3358d4" stroke-width="1.1"/><path d="M2.2,3.35h5.2" stroke="#2446c8" stroke-width="1.2"/><circle cx="3.0" cy="3.35" r="1.0" fill="#2446c8"/><path d="M4.3,3.35h0.8" stroke="#fdfdff" stroke-width="1.2"/></svg>
<div class="t" style="left:50.7px;top:68.10px;font-size:8.0px;line-height:12px;color:#1c1c1c;letter-spacing:-0.072px;-webkit-text-stroke:0.12px;">«modelicaPart» apollo: Rocket</div>
<svg class="r" style="left:22.8px;top:83.91999999999999px;" width="6" height="8" viewBox="0 0 6 8"><path d="M0.6,0.6v6.4l3.6,-3.2z" fill="#e2e2e2" stroke="#5a5a5a" stroke-width="0.8"/></svg>
<svg class="r" style="left:37.3px;top:83.31999999999998px;" width="10" height="7" viewBox="0 0 10 7"><rect x="0.55" y="0.55" width="8.7" height="5.6" rx="1" fill="#fdfdff" stroke="#3358d4" stroke-width="1.1"/><path d="M2.2,3.35h5.2" stroke="#2446c8" stroke-width="1.2"/><circle cx="3.0" cy="3.35" r="1.0" fill="#2446c8"/><path d="M4.3,3.35h0.8" stroke="#fdfdff" stroke-width="1.2"/></svg>
<div class="t" style="left:50.7px;top:81.42px;font-size:8.0px;line-height:12px;color:#1c1c1c;letter-spacing:-0.072px;-webkit-text-stroke:0.12px;">«constraintProperty» e5: ConstraintBlock5</div>
<svg class="r" style="left:22.8px;top:97.24000000000001px;" width="6" height="8" viewBox="0 0 6 8"><path d="M0.6,0.6v6.4l3.6,-3.2z" fill="#e2e2e2" stroke="#5a5a5a" stroke-width="0.8"/></svg>
<svg class="r" style="left:37.3px;top:96.64px;" width="10" height="7" viewBox="0 0 10 7"><rect x="0.55" y="0.55" width="8.7" height="5.6" rx="1" fill="#fdfdff" stroke="#3358d4" stroke-width="1.1"/><path d="M2.2,3.35h5.2" stroke="#2446c8" stroke-width="1.2"/><circle cx="3.0" cy="3.35" r="1.0" fill="#2446c8"/><path d="M4.3,3.35h0.8" stroke="#fdfdff" stroke-width="1.2"/></svg>
<div class="t" style="left:50.7px;top:94.74px;font-size:8.0px;line-height:12px;color:#1c1c1c;letter-spacing:-0.072px;-webkit-text-stroke:0.12px;">«constraintProperty» e6: ConstraintBlock6</div>
<svg class="r" style="left:37.3px;top:109.96px;" width="10" height="7" viewBox="0 0 10 7"><rect x="0.55" y="0.55" width="8.7" height="5.6" rx="1" fill="#fdfdff" stroke="#3358d4" stroke-width="1.1"/><path d="M2.2,3.35h5.2" stroke="#2446c8" stroke-width="1.2"/><circle cx="3.0" cy="3.35" r="1.0" fill="#2446c8"/><path d="M4.3,3.35h0.8" stroke="#fdfdff" stroke-width="1.2"/></svg>
<div class="t" style="left:50.7px;top:108.06px;font-size:8.0px;line-height:12px;color:#1c1c1c;letter-spacing:-0.188px;-webkit-text-stroke:0.12px;">force1</div>
<svg class="r" style="left:37.3px;top:123.28000000000002px;" width="10" height="7" viewBox="0 0 10 7"><rect x="0.55" y="0.55" width="8.7" height="5.6" rx="1" fill="#fdfdff" stroke="#3358d4" stroke-width="1.1"/><path d="M2.2,3.35h5.2" stroke="#2446c8" stroke-width="1.2"/><circle cx="3.0" cy="3.35" r="1.0" fill="#2446c8"/><path d="M4.3,3.35h0.8" stroke="#fdfdff" stroke-width="1.2"/></svg>
<div class="t" style="left:50.7px;top:121.38px;font-size:8.0px;line-height:12px;color:#1c1c1c;letter-spacing:-0.088px;-webkit-text-stroke:0.12px;">force2</div>
<svg class="r" style="left:22.8px;top:137.19999999999996px;" width="6" height="8" viewBox="0 0 6 8"><path d="M0.6,0.6v6.4l3.6,-3.2z" fill="#e2e2e2" stroke="#5a5a5a" stroke-width="0.8"/></svg>
<svg class="r" style="left:37.3px;top:136.59999999999997px;" width="10" height="7" viewBox="0 0 10 7"><rect x="0.55" y="0.55" width="8.7" height="5.6" rx="1" fill="#fdfdff" stroke="#3358d4" stroke-width="1.1"/><path d="M2.2,3.35h5.2" stroke="#2446c8" stroke-width="1.2"/><circle cx="3.0" cy="3.35" r="1.0" fill="#2446c8"/><path d="M4.3,3.35h0.8" stroke="#fdfdff" stroke-width="1.2"/></svg>
<div class="t" style="left:50.7px;top:134.70px;font-size:8.0px;line-height:12px;color:#1c1c1c;letter-spacing:-0.049px;-webkit-text-stroke:0.12px;">moon: CelestialBody</div>
<svg class="r" style="left:37.3px;top:149.92000000000002px;" width="10" height="7" viewBox="0 0 10 7"><rect x="0.55" y="0.55" width="8.7" height="5.6" rx="1" fill="#fdfdff" stroke="#3358d4" stroke-width="1.1"/><path d="M2.2,3.35h5.2" stroke="#2446c8" stroke-width="1.2"/><circle cx="3.0" cy="3.35" r="1.0" fill="#2446c8"/><path d="M4.3,3.35h0.8" stroke="#fdfdff" stroke-width="1.2"/></svg>
<div class="t" style="left:50.7px;top:148.02px;font-size:8.0px;line-height:12px;color:#1c1c1c;letter-spacing:-0.114px;-webkit-text-stroke:0.12px;">thrustDecreaseTime</div>
<svg class="r" style="left:37.3px;top:163.24px;" width="10" height="7" viewBox="0 0 10 7"><rect x="0.55" y="0.55" width="8.7" height="5.6" rx="1" fill="#fdfdff" stroke="#3358d4" stroke-width="1.1"/><path d="M2.2,3.35h5.2" stroke="#2446c8" stroke-width="1.2"/><circle cx="3.0" cy="3.35" r="1.0" fill="#2446c8"/><path d="M4.3,3.35h0.8" stroke="#fdfdff" stroke-width="1.2"/></svg>
<div class="t" style="left:50.7px;top:161.34px;font-size:8.0px;line-height:12px;color:#1c1c1c;letter-spacing:0.031px;-webkit-text-stroke:0.12px;">thrustEndTime</div>
<svg class="r" style="left:6.0px;top:177.16px;" width="7" height="7" viewBox="0 0 7 7"><path d="M5.6,0.4v5.2h-5.2z" fill="#1a1a1a"/></svg>
<svg class="r" style="left:22.8px;top:174.76px;" width="9" height="11" viewBox="0 0 9 11"><rect x="0.6" y="0.5" width="7.4" height="9.2" rx="0.8" fill="#fbfbfd" stroke="#4a7fd6" stroke-width="0.9"/><rect x="1.2" y="3.1" width="6.2" height="1.1" fill="#f0a08c"/><rect x="1.2" y="5.8" width="6.2" height="3.2" fill="#9db3a6"/><path d="M1.2,2.8h6.2 M1.2,5.6h6.2" stroke="#7da2dc" stroke-width="0.5"/></svg>
<div class="t" style="left:35.4px;top:174.66px;font-size:8.0px;line-height:12px;color:#1c1c1c;letter-spacing:-0.123px;-webkit-text-stroke:0.12px;">«block» Rocket</div>
<svg class="r" style="left:37.3px;top:187.68000000000004px;" width="10" height="10" viewBox="0 0 10 10"><path d="M2.6,1.6v2.6M7.2,1.6v2.2" stroke="#222a44" stroke-width="0.7"/><circle cx="2.6" cy="1.4" r="1.5" fill="#e8e000"/><circle cx="7.2" cy="1.4" r="1.5" fill="#e8e000"/><rect x="0.6" y="3.5" width="8.6" height="5.8" rx="0.6" fill="#8be068" stroke="#6cc24e" stroke-width="0.9"/><rect x="2.1" y="5.2" width="5.6" height="2.4" fill="#efe2f2" stroke="#1c1c1c" stroke-width="0.9"/></svg>
<div class="t" style="left:50.7px;top:187.98px;font-size:8.0px;line-height:12px;color:#1c1c1c;letter-spacing:-0.2px;-webkit-text-stroke:0.12px;">Rocket</div>
<svg class="r" style="left:22.8px;top:203.79999999999998px;" width="6" height="8" viewBox="0 0 6 8"><path d="M0.6,0.6v6.4l3.6,-3.2z" fill="#e2e2e2" stroke="#5a5a5a" stroke-width="0.8"/></svg>
<svg class="r" style="left:37.3px;top:203.2px;" width="10" height="7" viewBox="0 0 10 7"><rect x="0.55" y="0.55" width="8.7" height="5.6" rx="1" fill="#fdfdff" stroke="#3358d4" stroke-width="1.1"/><path d="M2.2,3.35h5.2" stroke="#2446c8" stroke-width="1.2"/><circle cx="3.0" cy="3.35" r="1.0" fill="#2446c8"/><path d="M4.3,3.35h0.8" stroke="#fdfdff" stroke-width="1.2"/></svg>
<div class="t" style="left:50.7px;top:201.30px;font-size:8.0px;line-height:12px;color:#1c1c1c;letter-spacing:-0.08px;-webkit-text-stroke:0.12px;">«constraintProperty» ConstraintProperty1: ConstraintBlock1</div>
<svg class="r" style="left:22.8px;top:217.12000000000003px;" width="6" height="8" viewBox="0 0 6 8"><path d="M0.6,0.6v6.4l3.6,-3.2z" fill="#e2e2e2" stroke="#5a5a5a" stroke-width="0.8"/></svg>
<svg class="r" style="left:37.3px;top:216.52000000000004px;" width="10" height="7" viewBox="0 0 10 7"><rect x="0.55" y="0.55" width="8.7" height="5.6" rx="1" fill="#fdfdff" stroke="#3358d4" stroke-width="1.1"/><path d="M2.2,3.35h5.2" stroke="#2446c8" stroke-width="1.2"/><circle cx="3.0" cy="3.35" r="1.0" fill="#2446c8"/><path d="M4.3,3.35h0.8" stroke="#fdfdff" stroke-width="1.2"/></svg>
<div class="t" style="left:50.7px;top:214.62px;font-size:8.0px;line-height:12px;color:#1c1c1c;letter-spacing:-0.08px;-webkit-text-stroke:0.12px;">«constraintProperty» ConstraintProperty2: ConstraintBlock2</div>
<svg class="r" style="left:22.8px;top:230.43999999999997px;" width="6" height="8" viewBox="0 0 6 8"><path d="M0.6,0.6v6.4l3.6,-3.2z" fill="#e2e2e2" stroke="#5a5a5a" stroke-width="0.8"/></svg>
<svg class="r" style="left:37.3px;top:229.83999999999997px;" width="10" height="7" viewBox="0 0 10 7"><rect x="0.55" y="0.55" width="8.7" height="5.6" rx="1" fill="#fdfdff" stroke="#3358d4" stroke-width="1.1"/><path d="M2.2,3.35h5.2" stroke="#2446c8" stroke-width="1.2"/><circle cx="3.0" cy="3.35" r="1.0" fill="#2446c8"/><path d="M4.3,3.35h0.8" stroke="#fdfdff" stroke-width="1.2"/></svg>
<div class="t" style="left:50.7px;top:227.94px;font-size:8.0px;line-height:12px;color:#1c1c1c;letter-spacing:-0.08px;-webkit-text-stroke:0.12px;">«constraintProperty» ConstraintProperty3: ConstraintBlock3</div>
<svg class="r" style="left:37.3px;top:243.16000000000003px;" width="10" height="7" viewBox="0 0 10 7"><rect x="0.55" y="0.55" width="8.7" height="5.6" rx="1" fill="#fdfdff" stroke="#3358d4" stroke-width="1.1"/><path d="M2.2,3.35h5.2" stroke="#2446c8" stroke-width="1.2"/><circle cx="3.0" cy="3.35" r="1.0" fill="#2446c8"/><path d="M4.3,3.35h0.8" stroke="#fdfdff" stroke-width="1.2"/></svg>
<div class="t" style="left:50.7px;top:241.26px;font-size:8.0px;line-height:12px;color:#1c1c1c;letter-spacing:-0.059px;-webkit-text-stroke:0.12px;">acceleration</div>
</div>
<div class="r" style="left:212px;top:134px;width:11px;height:249px;background:#717171;"></div>
<div class="r" style="left:212px;top:134px;width:11px;height:11.5px;background:#a6a6a6;border:1px solid #8e8e8e;box-sizing:border-box;"></div>
<svg class="r" style="left:214px;top:137px;" width="7" height="5" viewBox="0 0 7 5"><path d="M0.6,4 L3.5,1 L6.4,4Z" fill="#1a1a1a"/></svg>
<div class="r" style="left:212px;top:163px;width:11px;height:103px;background:#9b9b9b;border-left:1px solid #8c8c8c;border-right:1px solid #8c8c8c;box-sizing:border-box;"></div>
<div class="r" style="left:212px;top:372px;width:11px;height:11px;background:#a6a6a6;border:1px solid #8e8e8e;box-sizing:border-box;"></div>
<svg class="r" style="left:214px;top:375.4px;" width="7" height="5" viewBox="0 0 7 5"><path d="M0.6,1 L3.5,4 L6.4,1Z" fill="#1a1a1a"/></svg>
<div class="r" style="left:1px;top:383px;width:222px;height:15px;background:#b4b4b4;"></div>
<div class="r" style="left:1px;top:383px;width:222px;height:1px;background:#848484;"></div>
<div class="r" style="left:2px;top:383px;width:71px;height:14.5px;background:#dadada;border:1px solid #7a7a7a;border-top:none;box-sizing:border-box;"></div>
<svg class="r" style="left:4px;top:385px;" width="11" height="11" viewBox="0 0 11 11"><path d="M0.6,1.2h3l0.8,1h2.6v3.4h-6.4z" fill="#f2d26a" stroke="#b58f24" stroke-width="0.6"/><rect x="3.4" y="4.6" width="6.6" height="5.6" fill="#fff" stroke="#333" stroke-width="0.8"/><rect x="4.6" y="6.2" width="2" height="1.6" fill="#2c5fc0"/><rect x="7.2" y="7.8" width="2" height="1.6" fill="#2c5fc0"/></svg>
<div class="t" style="left:16.2px;top:385.10px;font-size:7.6px;line-height:12px;color:#222;letter-spacing:-0.046px;-webkit-text-stroke:0.18px;">Project Browser</div>
<svg class="r" style="left:76.5px;top:384.5px;" width="12" height="12" viewBox="0 0 12 12"><path d="M1,3.4 L5.2,0.8 L10.4,5.8 L6.4,8.6Z" fill="#ecd36a" stroke="#6a5a1a" stroke-width="0.7"/><path d="M3,4.4l3.6,3.2M4.6,3.2l3.6,3.4" stroke="#8a7a2a" stroke-width="0.5"/><circle cx="8.4" cy="8.6" r="2" fill="#dfe6f0" stroke="#333" stroke-width="0.7"/><path d="M6.2,11.2h4.6" stroke="#333" stroke-width="0.9"/></svg>
<div class="t" style="left:88.4px;top:385.10px;font-size:7.6px;line-height:12px;color:#222;letter-spacing:-0.216px;-webkit-text-stroke:0.18px;">Resources</div>
<div class="r" style="left:1px;top:397.6px;width:222px;height:4.6px;background:#8a8a8a;"></div>
<div class="r" style="left:1px;top:402.2px;width:222px;height:23.6px;background:#ababab;"></div>
<div class="t" style="left:4.0px;top:408.80px;font-size:12.55px;line-height:12px;color:#474747;-webkit-text-stroke:0;">Properties</div>
<svg class="r" style="left:186px;top:410.2px;" width="34" height="9" viewBox="0 0 34 9"><path d="M1.2,2.6h6.2l-3.1,3.6z" fill="#1b1b1b"/><path d="M15.8,1.2h3.4v3.6h-3.4z M14.8,4.9h5.4 M17.5,4.9v3" fill="none" stroke="#222" stroke-width="0.9"/><path d="M27.4,1.9l4.6,4.8m0,-4.8l-4.6,4.8" stroke="#1b1b1b" stroke-width="1.1"/></svg>
<div class="r" style="left:1px;top:425.8px;width:222px;height:15.4px;background:#b4b4b4;"></div>
<div class="r" style="left:3.4px;top:427px;width:13.4px;height:13.6px;background:#9f9f9f;"></div>
<svg class="r" style="left:4.5px;top:428px;" width="11" height="12" viewBox="0 0 11 12"><rect x="0.6" y="0.6" width="3.4" height="3" fill="#fff" stroke="#1a3a9a" stroke-width="0.8"/><rect x="0.6" y="6.6" width="3.4" height="3" fill="#fff" stroke="#1a3a9a" stroke-width="0.8"/><path d="M2.3,3.6v3 M5.6,1.4h1.6M5.6,3h1.6M5.6,7.4h1.6M5.6,9h1.6 M8.6,0.6v10" stroke="#222" stroke-width="0.9"/></svg>
<svg class="r" style="left:19.5px;top:428px;" width="11" height="12" viewBox="0 0 11 12"><text x="0" y="4.8" font-family="Liberation Sans" font-size="5.6" font-weight="bold" fill="#1a2a9a">A</text><text x="0.2" y="10.6" font-family="Liberation Sans" font-size="5.6" font-weight="bold" fill="#1a2a9a">Z</text><path d="M7.4,1v8.6M5.6,7.6l1.8,2.4l1.8,-2.4" fill="none" stroke="#1f7a2a" stroke-width="1"/></svg>
<div class="r" style="left:34.5px;top:427.5px;width:1px;height:12.5px;background:#9d9d9d;"></div>
<svg class="r" style="left:39px;top:429px;" width="12" height="10" viewBox="0 0 12 10"><path d="M1,5h3" stroke="#d8c6d8" stroke-width="1"/><path d="M7.4,2.2 L10,5 L7.4,7.8 L4.8,5Z" fill="#e49ad8" stroke="#c070b8" stroke-width="0.5"/></svg>
<svg class="r" style="left:56px;top:429px;" width="10" height="10" viewBox="0 0 10 10"><path d="M3.6,3.4 L6.4,2.4 L7,5.6 L4.6,8.2 L3,6.2Z" fill="#3c7cc8" stroke="#2458a8" stroke-width="0.4"/></svg>
<svg class="r" style="left:68px;top:427.6px;" width="12" height="12" viewBox="0 0 12 12"><rect x="0.8" y="3" width="7.4" height="7.6" fill="#e9eef6" stroke="#5a6a8a" stroke-width="0.8"/><rect x="0.8" y="3" width="7.4" height="1.8" fill="#6a8ac8"/><rect x="5.2" y="0.8" width="4.6" height="4.6" fill="#f4f4f4" stroke="#555" stroke-width="0.7"/><path d="M2.2,6.6h3M2.2,8.4h4" stroke="#5a6a8a" stroke-width="0.6"/><path d="M10.6,1v4" stroke="#444" stroke-width="0.7"/></svg>
<svg class="r" style="left:84px;top:428.4px;" width="10" height="11" viewBox="0 0 10 11"><path d="M4.6,0.6 L8.6,5 H6 V10 H3.2 V5 H0.6Z" fill="#48b874" stroke="#2a8a50" stroke-width="0.5"/></svg>
<div class="r" style="left:98.4px;top:427.5px;width:1px;height:12.5px;background:#9d9d9d;"></div>
<svg class="r" style="left:102.6px;top:429.6px;" width="13" height="9" viewBox="0 0 13 9"><circle cx="2.8" cy="5.4" r="1.9" fill="none" stroke="#3a4a9a" stroke-width="0.8"/><circle cx="7.6" cy="5.4" r="1.9" fill="none" stroke="#3a4a9a" stroke-width="0.8"/><path d="M2.2,3.6 L4,1 M7,3.6 L9,1.2 l2,-0.2" fill="none" stroke="#3a4a9a" stroke-width="0.7"/></svg>
<div class="r" style="left:1px;top:441.2px;width:222px;height:147.4px;background:#b9b9b9;"></div>
<svg class="r" style="left:5.6px;top:444.4px;" width="7" height="7" viewBox="0 0 7 7"><path d="M4.6,0.4v4.4h-4.4z" fill="#1a1a1a"/></svg>
<div class="t" style="left:15.0px;top:441.60px;font-size:7.9px;line-height:12px;color:#000;font-weight:bold;-webkit-text-stroke:0;">General Settings</div>
<div class="r" style="left:12.8px;top:453.0px;width:210.2px;height:10.4px;background:#d9d9d9;"></div>
<div class="r" style="left:88.8px;top:453.0px;width:1px;height:10.4px;background:#bcbcbc;"></div>
<div class="t" style="left:15.4px;top:453.00px;font-size:7.1px;line-height:12px;color:#7e7e7e;-webkit-text-stroke:0.1px;">Name</div>
<div class="r" style="left:12.8px;top:464.33px;width:210.2px;height:10.4px;background:#d9d9d9;"></div>
<div class="r" style="left:88.8px;top:464.33px;width:1px;height:10.4px;background:#bcbcbc;"></div>
<div class="t" style="left:15.4px;top:464.33px;font-size:7.1px;line-height:12px;color:#7e7e7e;-webkit-text-stroke:0.1px;">Scope</div>
<div class="r" style="left:12.8px;top:475.66px;width:210.2px;height:10.4px;background:#d9d9d9;"></div>
<div class="r" style="left:88.8px;top:475.66px;width:1px;height:10.4px;background:#bcbcbc;"></div>
<div class="t" style="left:15.4px;top:475.66px;font-size:7.1px;line-height:12px;color:#7e7e7e;-webkit-text-stroke:0.1px;">Type</div>
<div class="r" style="left:12.8px;top:486.99px;width:210.2px;height:10.4px;background:#d9d9d9;"></div>
<div class="r" style="left:88.8px;top:486.99px;width:1px;height:10.4px;background:#bcbcbc;"></div>
<div class="t" style="left:15.4px;top:486.99px;font-size:7.1px;line-height:12px;color:#7e7e7e;-webkit-text-stroke:0.1px;">Stereotype</div>
<div class="r" style="left:12.8px;top:498.32px;width:210.2px;height:10.4px;background:#d9d9d9;"></div>
<div class="r" style="left:88.8px;top:498.32px;width:1px;height:10.4px;background:#bcbcbc;"></div>
<div class="t" style="left:15.4px;top:498.32px;font-size:7.1px;line-height:12px;color:#7e7e7e;-webkit-text-stroke:0.1px;">Role</div>
<div class="r" style="left:12.8px;top:509.65px;width:210.2px;height:10.4px;background:#d9d9d9;"></div>
<div class="r" style="left:88.8px;top:509.65px;width:1px;height:10.4px;background:#bcbcbc;"></div>
<div class="t" style="left:15.4px;top:509.65px;font-size:7.1px;line-height:12px;color:#7e7e7e;-webkit-text-stroke:0.1px;">Complexity</div>
<div class="r" style="left:12.8px;top:520.98px;width:210.2px;height:10.4px;background:#d9d9d9;"></div>
<div class="r" style="left:88.8px;top:520.98px;width:1px;height:10.4px;background:#bcbcbc;"></div>
<div class="t" style="left:15.4px;top:520.98px;font-size:7.1px;line-height:12px;color:#7e7e7e;-webkit-text-stroke:0.1px;">Version</div>
<div class="r" style="left:12.8px;top:532.31px;width:210.2px;height:10.4px;background:#d9d9d9;"></div>
<div class="r" style="left:88.8px;top:532.31px;width:1px;height:10.4px;background:#bcbcbc;"></div>
<div class="t" style="left:15.4px;top:532.31px;font-size:7.1px;line-height:12px;color:#7e7e7e;-webkit-text-stroke:0.1px;">Phase</div>
<div class="r" style="left:12.8px;top:543.64px;width:210.2px;height:10.4px;background:#d9d9d9;"></div>
<div class="r" style="left:88.8px;top:543.64px;width:1px;height:10.4px;background:#bcbcbc;"></div>
<div class="t" style="left:15.4px;top:543.64px;font-size:7.1px;line-height:12px;color:#7e7e7e;-webkit-text-stroke:0.1px;">Language</div>
<div class="r" style="left:12.8px;top:554.97px;width:210.2px;height:10.4px;background:#d9d9d9;"></div>
<div class="r" style="left:88.8px;top:554.97px;width:1px;height:10.4px;background:#bcbcbc;"></div>
<div class="t" style="left:15.4px;top:554.97px;font-size:7.1px;line-height:12px;color:#7e7e7e;-webkit-text-stroke:0.1px;">Filename</div>
<svg class="r" style="left:4.8px;top:568.2px;" width="6" height="8" viewBox="0 0 6 8"><path d="M0.6,0.6v6.4l3.6,-3.2z" fill="#c8c8c8" stroke="#5a5a5a" stroke-width="0.8"/></svg>
<div class="t" style="left:15.4px;top:566.30px;font-size:7.9px;line-height:12px;color:#000;font-weight:bold;-webkit-text-stroke:0;">Project</div>
<svg class="r" style="left:4.8px;top:579.5px;" width="6" height="8" viewBox="0 0 6 8"><path d="M0.6,0.6v6.4l3.6,-3.2z" fill="#c8c8c8" stroke="#5a5a5a" stroke-width="0.8"/></svg>
<div class="t" style="left:15.4px;top:577.60px;font-size:7.9px;line-height:12px;color:#000;font-weight:bold;-webkit-text-stroke:0;">Advanced</div>
<div class="r" style="left:1px;top:588.6px;width:222px;height:59.4px;background:#d6d6d6;"></div>
<div class="r" style="left:88.8px;top:588.6px;width:1px;height:59.4px;background:#bdbdbd;"></div>
<div class="r" style="left:1px;top:648px;width:222px;height:39px;background:#b3b3b3;"></div>
<div class="r" style="left:1px;top:687px;width:222px;height:1px;background:#848484;"></div>
<div class="r" style="left:1px;top:688px;width:222px;height:15px;background:#b4b4b4;"></div>
<div class="r" style="left:2px;top:687.5px;width:52.4px;height:15px;background:#dadada;border:1px solid #7a7a7a;border-top:none;box-sizing:border-box;"></div>
<svg class="r" style="left:4px;top:689px;" width="11" height="12" viewBox="0 0 11 12"><rect x="1" y="3.4" width="8" height="7.4" fill="#f4f6fb" stroke="#3a5aa8" stroke-width="0.8"/><rect x="1" y="3.4" width="8" height="1.8" fill="#3a6ac8"/><path d="M2.4,7h5M2.4,8.8h5" stroke="#3a5aa8" stroke-width="0.6"/><path d="M4,3 L7.4,0.6 L9.6,2.6 L6.6,4.4Z" fill="#e8d040" stroke="#6a5a10" stroke-width="0.5"/><path d="M1,2.4l2,-1.4l1.4,1.6" fill="#58a848" stroke="#2a6a20" stroke-width="0.4"/></svg>
<div class="t" style="left:16.0px;top:689.40px;font-size:7.6px;line-height:12px;color:#222;letter-spacing:-0.026px;-webkit-text-stroke:0.18px;">Properties</div>
<svg class="r" style="left:58px;top:688.6px;" width="11" height="13" viewBox="0 0 11 13"><path d="M1,1.4h6.4l2.4,2.4v7.8h-8.8z" fill="#fff" stroke="#3a3a3a" stroke-width="0.9"/><path d="M3.4,1.2 L9.6,3.4 L8.6,6.2 L2.6,4.2Z" fill="#e8242a" stroke="#8a1014" stroke-width="0.4"/></svg>
<div class="t" style="left:70.0px;top:689.40px;font-size:7.6px;line-height:12px;color:#222;letter-spacing:-0.088px;-webkit-text-stroke:0.18px;">Notes</div>
<div class="r" style="left:223px;top:95px;width:2.5px;height:608px;background:#b7b7b7;"></div>
<div class="r" style="left:225.5px;top:95px;width:2.5px;height:608px;background:#868686;"></div>
<div class="r" style="left:227px;top:95px;width:1033px;height:18px;background:#ababab;"></div>
<div class="r" style="left:227px;top:112.4px;width:1033px;height:1px;background:#b4b4b4;"></div>
<div class="r" style="left:227px;top:113.4px;width:1033px;height:13.6px;background:#adadad;"></div>
<svg class="r" style="left:231px;top:101px;" width="9" height="8" viewBox="0 0 9 8"><path d="M1,1l2.7,2.8l-2.7,2.8M4.3,1l2.7,2.8l-2.7,2.8" fill="none" stroke="#141414" stroke-width="1.1"/></svg>
<svg class="r" style="left:244.8px;top:98.8px;" width="10" height="10" viewBox="0 0 10 10"><path d="M2.6,1.6v2.6M7.2,1.6v2.2" stroke="#222a44" stroke-width="0.7"/><circle cx="2.6" cy="1.4" r="1.5" fill="#e8e000"/><circle cx="7.2" cy="1.4" r="1.5" fill="#e8e000"/><rect x="0.6" y="3.5" width="8.6" height="5.8" rx="0.6" fill="#8be068" stroke="#6cc24e" stroke-width="0.9"/><rect x="2.1" y="5.2" width="5.6" height="2.4" fill="#efe2f2" stroke="#1c1c1c" stroke-width="0.9"/></svg>
<div class="t" style="left:267.9px;top:99.20px;font-size:7.4px;line-height:12px;color:#7e7e7e;letter-spacing:-0.013px;-webkit-text-stroke:0.1px;">par [block] Rocket [Rocket]</div>
<svg class="r" style="left:1232px;top:100px;" width="26" height="9" viewBox="0 0 26 9"><path d="M1.8,2.8h6l-3,3.4z" fill="#1b1b1b"/><path d="M17,1.8l4.4,4.6m0,-4.6l-4.4,4.6" stroke="#111" stroke-width="1.3"/></svg>
<svg class="r" style="left:1234px;top:116px;" width="24" height="9" viewBox="0 0 24 9"><path d="M7.6,1.6v5.2l-3,-2.6z" fill="#bdbdbd" stroke="#3c3c3c" stroke-width="0.7"/><path d="M16.6,1.6v5.2l3,-2.6z" fill="#bdbdbd" stroke="#3c3c3c" stroke-width="0.7"/></svg>
<svg class="r" style="left:229.6px;top:115.6px;" width="12" height="12" viewBox="0 0 12 12"><g transform="translate(5.6,5.7)"><circle r="4.7" fill="#fff" stroke="#1c1ce6" stroke-width="1.05"/><circle cx="0" cy="-2.1620000000000004" r="1.175" fill="#1c1ce6"/><circle cx="2.1620000000000004" cy="0" r="1.175" fill="#1c1ce6"/><circle cx="0" cy="2.1620000000000004" r="1.175" fill="#1c1ce6"/><circle cx="-2.1620000000000004" cy="0" r="1.175" fill="#1c1ce6"/></g></svg>
<div class="t" style="left:241.8px;top:115.90px;font-size:7.5px;line-height:12px;color:#222;letter-spacing:-0.105px;">Start Page</div>
<svg class="r" style="left:284px;top:116.4px;" width="11" height="10" viewBox="0 0 11 10"><path d="M2.5,3.5v4.2h5 M5,2.4h2.5 M5.6,5h2" fill="none" stroke="#222" stroke-width="0.8"/><rect x="0.5" y="0.6" width="3.6" height="3.2" fill="#fff" stroke="#222" stroke-width="0.8"/><rect x="0.5" y="0.6" width="3.6" height="1.1" fill="#2f62c8"/><rect x="6.9" y="0.6" width="3.2" height="3" fill="#fff" stroke="#222" stroke-width="0.8"/><rect x="6.9" y="5.9" width="3.2" height="3.2" fill="#fff" stroke="#222" stroke-width="0.8"/><path d="M6.4,5.4h3.2" stroke="#2f62c8" stroke-width="0.9"/></svg>
<div class="t" style="left:295.9px;top:115.90px;font-size:7.5px;line-height:12px;color:#222;letter-spacing:-0.089px;">Rocket</div>
<svg class="r" style="left:327px;top:116.4px;" width="11" height="10" viewBox="0 0 11 10"><path d="M2.5,3.5v4.2h5 M5,2.4h2.5 M5.6,5h2" fill="none" stroke="#222" stroke-width="0.8"/><rect x="0.5" y="0.6" width="3.6" height="3.2" fill="#fff" stroke="#222" stroke-width="0.8"/><rect x="0.5" y="0.6" width="3.6" height="1.1" fill="#2f62c8"/><rect x="6.9" y="0.6" width="3.2" height="3" fill="#fff" stroke="#222" stroke-width="0.8"/><rect x="6.9" y="5.9" width="3.2" height="3.2" fill="#fff" stroke="#222" stroke-width="0.8"/><path d="M6.4,5.4h3.2" stroke="#2f62c8" stroke-width="0.9"/></svg>
<div class="t" style="left:338.4px;top:115.90px;font-size:7.5px;line-height:12px;color:#222;letter-spacing:0.099px;">constraintBlocks</div>
<div class="r" style="left:399px;top:113.8px;width:56.6px;height:13.4px;background:#d6d6d6;border:1px solid #7c7c7c;border-bottom:none;box-sizing:border-box;"></div>
<svg class="r" style="left:403.4px;top:116px;" width="10" height="10" viewBox="0 0 10 10"><path d="M2.6,1.6v2.6M7.2,1.6v2.2" stroke="#222a44" stroke-width="0.7"/><circle cx="2.6" cy="1.4" r="1.5" fill="#e8e000"/><circle cx="7.2" cy="1.4" r="1.5" fill="#e8e000"/><rect x="0.6" y="3.5" width="8.6" height="5.8" rx="0.6" fill="#8be068" stroke="#6cc24e" stroke-width="0.9"/><rect x="2.1" y="5.2" width="5.6" height="2.4" fill="#efe2f2" stroke="#1c1c1c" stroke-width="0.9"/></svg>
<div class="t" style="left:414.6px;top:115.90px;font-size:7.3px;line-height:12px;color:#111;font-weight:bold;letter-spacing:-0.208px;-webkit-text-stroke:0;">Rocket</div>
<svg class="r" style="left:445px;top:118px;" width="7" height="7" viewBox="0 0 7 7"><path d="M1,1l4.6,4.6m0,-4.6l-4.6,4.6" stroke="#111" stroke-width="1.1"/></svg>
<div class="r" style="left:227px;top:127px;width:1021px;height:1px;background:#4e4e4e;"></div>
<div class="r" style="left:228px;top:128px;width:1019.5px;height:575px;background:linear-gradient(#ffffff 0,#fffdf8 40%,#fffbf3 100%);"></div>
<div class="r" style="left:1247.5px;top:128px;width:11.5px;height:575px;background:#707070;border-left:1px solid #868686;border-right:1px solid #868686;box-sizing:border-box;"></div>
<div class="r" style="left:1247.5px;top:128px;width:11.5px;height:378px;background:#9b9b9b;border-left:1px solid #868686;border-right:1px solid #868686;border-bottom:1px solid #888;box-sizing:border-box;"></div>
<div class="r" style="left:1247.5px;top:128px;width:11.5px;height:11.5px;background:#a8a8a8;border:1px solid #8a8a8a;box-sizing:border-box;"></div>
<svg class="r" style="left:1249.8px;top:131.4px;" width="7" height="5" viewBox="0 0 7 5"><path d="M0.5,4 L3.5,1 L6.5,4Z" fill="#1a1a1a"/></svg>
<div class="r" style="left:1247.5px;top:691px;width:11.5px;height:12px;background:#a8a8a8;border:1px solid #8a8a8a;box-sizing:border-box;"></div>
<svg class="r" style="left:1249.8px;top:695px;" width="7" height="5" viewBox="0 0 7 5"><path d="M0.5,1 L3.5,4 L6.5,1Z" fill="#1a1a1a"/></svg>
<div class="r" style="left:1259px;top:94px;width:21px;height:609px;background:#ababab;"></div>
<div class="r" style="left:1275.6px;top:99px;width:4.4px;height:18.5px;background:#9e9e9e;"></div>
<div class="t" style="left:1262.4px;top:100.8px;font-size:7.8px;line-height:9px;color:#262626;writing-mode:vertical-rl;-webkit-text-stroke:0;">Start</div>
<svg class="r" style="left:0px;top:0px;" width="1280" height="719" viewBox="0 0 1280 719"><defs><linearGradient id="gb" x1="0" x2="1" y1="0" y2="0"><stop offset="0" stop-color="#e1ecfb"/><stop offset="1" stop-color="#b7d4f4"/></linearGradient><linearGradient id="gp" x1="0" x2="1" y1="0" y2="1"><stop offset="0" stop-color="#e6effc"/><stop offset="1" stop-color="#b4d2f3"/></linearGradient></defs><rect x="242.5" y="142.5" width="633" height="434" fill="none" stroke="#141414" stroke-width="1.15"/><path d="M242.5,157.5 H338.6 L348.5,146.6 V142.5" fill="none" stroke="#141414" stroke-width="1.1"/><polyline points="363.5,242.5 298.5,242.5 298.5,320.5" fill="none" stroke="#2e2e2e" stroke-width="1"/><polyline points="298.5,342.5 298.5,421.5 372.5,421.5" fill="none" stroke="#2e2e2e" stroke-width="1"/><polyline points="511.5,227.5 565.5,227.5" fill="none" stroke="#2e2e2e" stroke-width="1"/><polyline points="511.5,256.5 565.5,256.5" fill="none" stroke="#2e2e2e" stroke-width="1"/><polyline points="615.5,256.5 661.5,256.5" fill="none" stroke="#2e2e2e" stroke-width="1"/><polyline points="783.5,240.5 861.5,240.5 861.5,331.5" fill="none" stroke="#2e2e2e" stroke-width="1"/><polyline points="615.5,342.5 652.5,342.5" fill="none" stroke="#2e2e2e" stroke-width="1"/><polyline points="781.5,342.5 818.5,342.5" fill="none" stroke="#2e2e2e" stroke-width="1"/><polyline points="440.5,294.5 440.5,322.5" fill="none" stroke="#2e2e2e" stroke-width="1"/><polyline points="440.5,344.5 440.5,381.5" fill="none" stroke="#2e2e2e" stroke-width="1"/><polyline points="440.5,463.5 440.5,490.5" fill="none" stroke="#2e2e2e" stroke-width="1"/><rect x="365.1" y="183.1" width="147.0" height="112.0" rx="8" fill="#8a8a8a" opacity="0.5"/><rect x="363.5" y="181.5" width="147.0" height="112.0" rx="8" fill="#dbe8fa" stroke="#262a33" stroke-width="1"/><rect x="663.1" y="206.1" width="121.0" height="66.0" rx="8" fill="#8a8a8a" opacity="0.5"/><rect x="661.5" y="204.5" width="121.0" height="66.0" rx="8" fill="#dbe8fa" stroke="#262a33" stroke-width="1"/><rect x="654.1" y="298.1" width="128.0" height="74.0" rx="8" fill="#8a8a8a" opacity="0.5"/><rect x="652.5" y="296.5" width="128.0" height="74.0" rx="8" fill="#dbe8fa" stroke="#262a33" stroke-width="1"/><rect x="374.1" y="384.1" width="149.0" height="80.0" rx="8" fill="#8a8a8a" opacity="0.5"/><rect x="372.5" y="382.5" width="149.0" height="80.0" rx="8" fill="#dbe8fa" stroke="#262a33" stroke-width="1"/><rect x="567.0" y="218.0" width="50.0" height="22.0" rx="2" fill="#8a8a8a" opacity="0.42"/><rect x="565.5" y="216.5" width="50.0" height="22.0" rx="2" fill="url(#gb)" stroke="#232a3a" stroke-width="1.1"/><rect x="566.5" y="217.5" width="48.0" height="20.0" rx="1" fill="none" stroke="#f2f7fe" stroke-width="0.8" opacity="0.8"/><rect x="567.0" y="247.0" width="50.0" height="22.0" rx="2" fill="#8a8a8a" opacity="0.42"/><rect x="565.5" y="245.5" width="50.0" height="22.0" rx="2" fill="url(#gb)" stroke="#232a3a" stroke-width="1.1"/><rect x="566.5" y="246.5" width="48.0" height="20.0" rx="1" fill="none" stroke="#f2f7fe" stroke-width="0.8" opacity="0.8"/><rect x="567.0" y="332.0" width="50.0" height="23.0" rx="2" fill="#8a8a8a" opacity="0.42"/><rect x="565.5" y="330.5" width="50.0" height="23.0" rx="2" fill="url(#gb)" stroke="#232a3a" stroke-width="1.1"/><rect x="566.5" y="331.5" width="48.0" height="21.0" rx="1" fill="none" stroke="#f2f7fe" stroke-width="0.8" opacity="0.8"/><rect x="820.0" y="333.0" width="50.0" height="22.0" rx="2" fill="#8a8a8a" opacity="0.42"/><rect x="818.5" y="331.5" width="50.0" height="22.0" rx="2" fill="url(#gb)" stroke="#232a3a" stroke-width="1.1"/><rect x="819.5" y="332.5" width="48.0" height="20.0" rx="1" fill="none" stroke="#f2f7fe" stroke-width="0.8" opacity="0.8"/><rect x="276.0" y="322.0" width="50.0" height="22.0" rx="2" fill="#8a8a8a" opacity="0.42"/><rect x="274.5" y="320.5" width="50.0" height="22.0" rx="2" fill="url(#gb)" stroke="#232a3a" stroke-width="1.1"/><rect x="275.5" y="321.5" width="48.0" height="20.0" rx="1" fill="none" stroke="#f2f7fe" stroke-width="0.8" opacity="0.8"/><rect x="417.0" y="324.0" width="49.0" height="22.0" rx="2" fill="#8a8a8a" opacity="0.42"/><rect x="415.5" y="322.5" width="49.0" height="22.0" rx="2" fill="url(#gb)" stroke="#232a3a" stroke-width="1.1"/><rect x="416.5" y="323.5" width="47.0" height="20.0" rx="1" fill="none" stroke="#f2f7fe" stroke-width="0.8" opacity="0.8"/><rect x="416.0" y="491.0" width="50.0" height="41.0" rx="2" fill="#8a8a8a" opacity="0.42"/><rect x="414.5" y="489.5" width="50.0" height="41.0" rx="2" fill="url(#gb)" stroke="#232a3a" stroke-width="1.1"/><rect x="415.5" y="490.5" width="48.0" height="39.0" rx="1" fill="none" stroke="#f2f7fe" stroke-width="0.8" opacity="0.8"/><rect x="364.7" y="237.7" width="11" height="11" fill="#8a8a8a" opacity="0.4"/><rect x="363.5" y="236.5" width="11" height="11" fill="url(#gp)" stroke="#262a33" stroke-width="1"/><rect x="500.7" y="223.7" width="11" height="11" fill="#8a8a8a" opacity="0.4"/><rect x="499.5" y="222.5" width="11" height="11" fill="url(#gp)" stroke="#262a33" stroke-width="1"/><rect x="500.7" y="252.7" width="11" height="11" fill="#8a8a8a" opacity="0.4"/><rect x="499.5" y="251.5" width="11" height="11" fill="url(#gp)" stroke="#262a33" stroke-width="1"/><rect x="436.7" y="283.7" width="11" height="11" fill="#8a8a8a" opacity="0.4"/><rect x="435.5" y="282.5" width="11" height="11" fill="url(#gp)" stroke="#262a33" stroke-width="1"/><rect x="662.7" y="253.7" width="11" height="11" fill="#8a8a8a" opacity="0.4"/><rect x="661.5" y="252.5" width="11" height="11" fill="url(#gp)" stroke="#262a33" stroke-width="1"/><rect x="772.7" y="235.7" width="11" height="11" fill="#8a8a8a" opacity="0.4"/><rect x="771.5" y="234.5" width="11" height="11" fill="url(#gp)" stroke="#262a33" stroke-width="1"/><rect x="653.7" y="337.7" width="11" height="11" fill="#8a8a8a" opacity="0.4"/><rect x="652.5" y="336.5" width="11" height="11" fill="url(#gp)" stroke="#262a33" stroke-width="1"/><rect x="770.7" y="338.7" width="11" height="11" fill="#8a8a8a" opacity="0.4"/><rect x="769.5" y="337.5" width="11" height="11" fill="url(#gp)" stroke="#262a33" stroke-width="1"/><rect x="434.7" y="383.7" width="11" height="11" fill="#8a8a8a" opacity="0.4"/><rect x="433.5" y="382.5" width="11" height="11" fill="url(#gp)" stroke="#262a33" stroke-width="1"/><rect x="373.7" y="420.7" width="11" height="11" fill="#8a8a8a" opacity="0.4"/><rect x="372.5" y="419.5" width="11" height="11" fill="url(#gp)" stroke="#262a33" stroke-width="1"/><rect x="435.7" y="452.7" width="11" height="11" fill="#8a8a8a" opacity="0.4"/><rect x="434.5" y="451.5" width="11" height="11" fill="url(#gp)" stroke="#262a33" stroke-width="1"/></svg>
<div class="t" style="left:246px;top:144.10px;font-size:7.5px;line-height:12px;color:#000;font-weight:bold;letter-spacing:-0.305px;-webkit-text-stroke:0;">par [block] Rocket [Rocket]</div>
<div class="t" style="left:370px;top:194.40px;font-size:8.0px;line-height:12px;color:#0c0c0c;letter-spacing:-0.024px;-webkit-text-stroke:0.1px;">ConstraintProperty1 : ConstraintBlock1</div>
<div class="t" style="left:364.2px;top:204.00px;font-size:8.0px;line-height:12px;color:#0c0c0c;letter-spacing:-0.08px;-webkit-text-stroke:0.1px;">{(thrust-mass*gravity)/mass=acceleration}</div>
<div class="t" style="left:376.5px;top:237.00px;font-size:8.0px;line-height:12px;color:#0c0c0c;letter-spacing:-0.205px;-webkit-text-stroke:0.1px;">mass</div>
<div class="t" style="left:513px;top:222.70px;font-size:8.0px;line-height:12px;color:#0c0c0c;letter-spacing:-0.011px;-webkit-text-stroke:0.1px;">gravity</div>
<div class="t" style="left:521.4px;top:215.70px;font-size:8.0px;line-height:12px;color:#0c0c0c;letter-spacing:0.237px;-webkit-text-stroke:0.1px;">«equal»</div>
<div class="t" style="left:513px;top:251.90px;font-size:8.0px;line-height:12px;color:#0c0c0c;letter-spacing:0.196px;-webkit-text-stroke:0.1px;">acceleration</div>
<div class="t" style="left:523.3px;top:261.90px;font-size:8.0px;line-height:12px;color:#0c0c0c;letter-spacing:0.204px;-webkit-text-stroke:0.1px;">«equal»</div>
<div class="t" style="left:449px;top:283.50px;font-size:8.0px;line-height:12px;color:#0c0c0c;letter-spacing:0.338px;-webkit-text-stroke:0.1px;">thrust</div>
<div class="t" style="left:330.9px;top:242.90px;font-size:8.0px;line-height:12px;color:#0c0c0c;letter-spacing:0.254px;-webkit-text-stroke:0.1px;">«equal»</div>
<div class="t" style="left:578.6px;top:222.90px;font-size:7.5px;line-height:12px;color:#000;font-weight:bold;letter-spacing:-0.266px;-webkit-text-stroke:0;">gravity</div>
<div class="t" style="left:569.9px;top:251.40px;font-size:7.4px;line-height:12px;color:#000;font-weight:bold;letter-spacing:-0.29px;-webkit-text-stroke:0;">acceleration</div>
<div class="t" style="left:625.4px;top:260.40px;font-size:8.0px;line-height:12px;color:#0c0c0c;letter-spacing:0.154px;-webkit-text-stroke:0.1px;">«equal»</div>
<div class="t" style="left:686.2px;top:217.90px;font-size:8.0px;line-height:12px;color:#0c0c0c;letter-spacing:-0.048px;-webkit-text-stroke:0.1px;">e4 : ConstraintBlock4</div>
<div class="t" style="left:673.9px;top:227.70px;font-size:8.0px;line-height:12px;color:#0c0c0c;letter-spacing:0.084px;-webkit-text-stroke:0.1px;">{der(velocity) = acceleration}</div>
<div class="t" style="left:675.6px;top:253.20px;font-size:8.0px;line-height:12px;color:#0c0c0c;letter-spacing:0.114px;-webkit-text-stroke:0.1px;">acceleration</div>
<div class="t" style="left:786.5px;top:230.80px;font-size:8.0px;line-height:12px;color:#0c0c0c;letter-spacing:0.117px;-webkit-text-stroke:0.1px;">velocity</div>
<div class="t" style="left:783px;top:246.80px;font-size:8.0px;line-height:12px;color:#0c0c0c;letter-spacing:0.17px;-webkit-text-stroke:0.1px;">«equal»</div>
<div class="t" style="left:577.0px;top:336.60px;font-size:7.5px;line-height:12px;color:#000;font-weight:bold;letter-spacing:-0.21px;-webkit-text-stroke:0;">altitude</div>
<div class="t" style="left:679.2px;top:309.20px;font-size:8.0px;line-height:12px;color:#0c0c0c;letter-spacing:-0.025px;-webkit-text-stroke:0.1px;">ConstraintProperty3 :</div>
<div class="t" style="left:687px;top:318.40px;font-size:8.0px;line-height:12px;color:#0c0c0c;letter-spacing:0.021px;-webkit-text-stroke:0.1px;">ConstraintBlock3</div>
<div class="t" style="left:677.3px;top:327.70px;font-size:8.0px;line-height:12px;color:#0c0c0c;letter-spacing:0.174px;-webkit-text-stroke:0.1px;">{der(altitude)=velocity}</div>
<div class="t" style="left:666px;top:337.20px;font-size:8.0px;line-height:12px;color:#0c0c0c;letter-spacing:0.457px;-webkit-text-stroke:0.1px;">altitude</div>
<div class="t" style="left:786px;top:356.00px;font-size:8.0px;line-height:12px;color:#0c0c0c;letter-spacing:0.046px;-webkit-text-stroke:0.1px;">velocity</div>
<div class="t" style="left:786.5px;top:327.40px;font-size:8.0px;line-height:12px;color:#0c0c0c;letter-spacing:0.17px;-webkit-text-stroke:0.1px;">«equal»</div>
<div class="t" style="left:620.4px;top:342.80px;font-size:8.0px;line-height:12px;color:#0c0c0c;letter-spacing:0.054px;-webkit-text-stroke:0.1px;">«equal»</div>
<div class="t" style="left:831.3px;top:337.40px;font-size:7.3px;line-height:12px;color:#000;font-weight:bold;letter-spacing:-0.283px;-webkit-text-stroke:0;">velocity</div>
<div class="t" style="left:290.40000000000003px;top:326.60px;font-size:7.1px;line-height:12px;color:#000;font-weight:bold;letter-spacing:-0.253px;-webkit-text-stroke:0;">mass</div>
<div class="t" style="left:429.95px;top:328.60px;font-size:7.1px;line-height:12px;color:#000;font-weight:bold;letter-spacing:-0.283px;-webkit-text-stroke:0;">thrust</div>
<div class="t" style="left:441px;top:308.50px;font-size:8.0px;line-height:12px;color:#0c0c0c;letter-spacing:0.137px;-webkit-text-stroke:0.1px;">«equal»</div>
<div class="t" style="left:441px;top:363.70px;font-size:8.0px;line-height:12px;color:#0c0c0c;letter-spacing:0.137px;-webkit-text-stroke:0.1px;">«equal»</div>
<div class="t" style="left:447.3px;top:383.00px;font-size:8.0px;line-height:12px;color:#0c0c0c;letter-spacing:0.198px;-webkit-text-stroke:0.1px;">thrust</div>
<div class="t" style="left:380px;top:394.80px;font-size:8.0px;line-height:12px;color:#0c0c0c;letter-spacing:-0.027px;-webkit-text-stroke:0.1px;">ConstraintProperty2 : ConstraintBlock2</div>
<div class="t" style="left:377.2px;top:404.60px;font-size:8.0px;line-height:12px;color:#0c0c0c;letter-spacing:-0.276px;-webkit-text-stroke:0.1px;">{der(mass) = -massLossRate * abs(thrust)}</div>
<div class="t" style="left:386px;top:420.50px;font-size:8.0px;line-height:12px;color:#0c0c0c;letter-spacing:-0.138px;-webkit-text-stroke:0.1px;">mass</div>
<div class="t" style="left:335.8px;top:422.50px;font-size:8.0px;line-height:12px;color:#0c0c0c;letter-spacing:0.154px;-webkit-text-stroke:0.1px;">«equal»</div>
<div class="t" style="left:448.7px;top:452.70px;font-size:8.0px;line-height:12px;color:#0c0c0c;letter-spacing:-0.147px;-webkit-text-stroke:0.1px;">massLossRate</div>
<div class="t" style="left:440.3px;top:476.40px;font-size:8.0px;line-height:12px;color:#0c0c0c;letter-spacing:0.154px;-webkit-text-stroke:0.1px;">«equal»</div>
<div class="t" style="left:416.05px;top:496.50px;font-size:6.8px;line-height:12px;color:#000;font-weight:bold;letter-spacing:-0.245px;-webkit-text-stroke:0;">massLossRate</div>
<div class="r" style="left:0px;top:703px;width:1280px;height:16px;background:#555555;"></div>
<div class="t" style="left:3.0px;top:705.90px;font-size:7.5px;line-height:12px;color:#f0f0f0;letter-spacing:0.011px;-webkit-text-stroke:0.1px;">par [block] Rocket [Rocket]:</div>
<div class="t" style="left:101.4px;top:705.90px;font-size:7.5px;line-height:12px;color:#f0f0f0;letter-spacing:-0.089px;-webkit-text-stroke:0.1px;">created: 15/08/2016 2:07:42 PM</div>
<div class="t" style="left:211px;top:705.90px;font-size:7.5px;line-height:12px;color:#f0f0f0;letter-spacing:-0.024px;-webkit-text-stroke:0.1px;">modified: 15/08/2016 2:07:42 PM</div>
<div class="t" style="left:326.8px;top:705.90px;font-size:7.5px;line-height:12px;color:#f0f0f0;letter-spacing:-0.328px;-webkit-text-stroke:0.1px;">100%</div>
<div class="t" style="left:351px;top:705.90px;font-size:7.5px;line-height:12px;color:#f0f0f0;letter-spacing:-0.141px;-webkit-text-stroke:0.1px;">799 x 1150</div>
<svg class="r" style="left:1066px;top:706px;" width="90" height="11" viewBox="0 0 90 11"><path d="M3,5.4h4.4" stroke="#c8c8c8" stroke-width="1"/><path d="M15,5.4h58" stroke="#b0b0b0" stroke-width="0.8"/><rect x="23.6" y="1.6" width="2.6" height="7.8" fill="#e8e8e8" stroke="#8a8a8a" stroke-width="0.5"/><path d="M80.2,5.4h4.6M82.5,3.1v4.6" stroke="#c8c8c8" stroke-width="1"/></svg>
<div class="t" style="left:1160.6px;top:705.90px;font-size:7.2px;line-height:12px;color:#8c8c8c;letter-spacing:-0.203px;-webkit-text-stroke:0;">CAP</div>
<div class="t" style="left:1186.4px;top:705.90px;font-size:7.2px;line-height:12px;color:#f4f4f4;font-weight:bold;letter-spacing:0.851px;-webkit-text-stroke:0;">NUM</div>
<div class="t" style="left:1217.7px;top:705.90px;font-size:7.2px;line-height:12px;color:#8c8c8c;letter-spacing:-1.036px;-webkit-text-stroke:0;">SCRL</div>
<div class="t" style="left:1247.2px;top:705.90px;font-size:7.2px;line-height:12px;color:#8c8c8c;letter-spacing:0.049px;-webkit-text-stroke:0;">CLOUD</div>
<div class="r" style="left:0px;top:0px;width:1px;height:719px;background:#1e8be0;"></div>
</div>
</body></html>
